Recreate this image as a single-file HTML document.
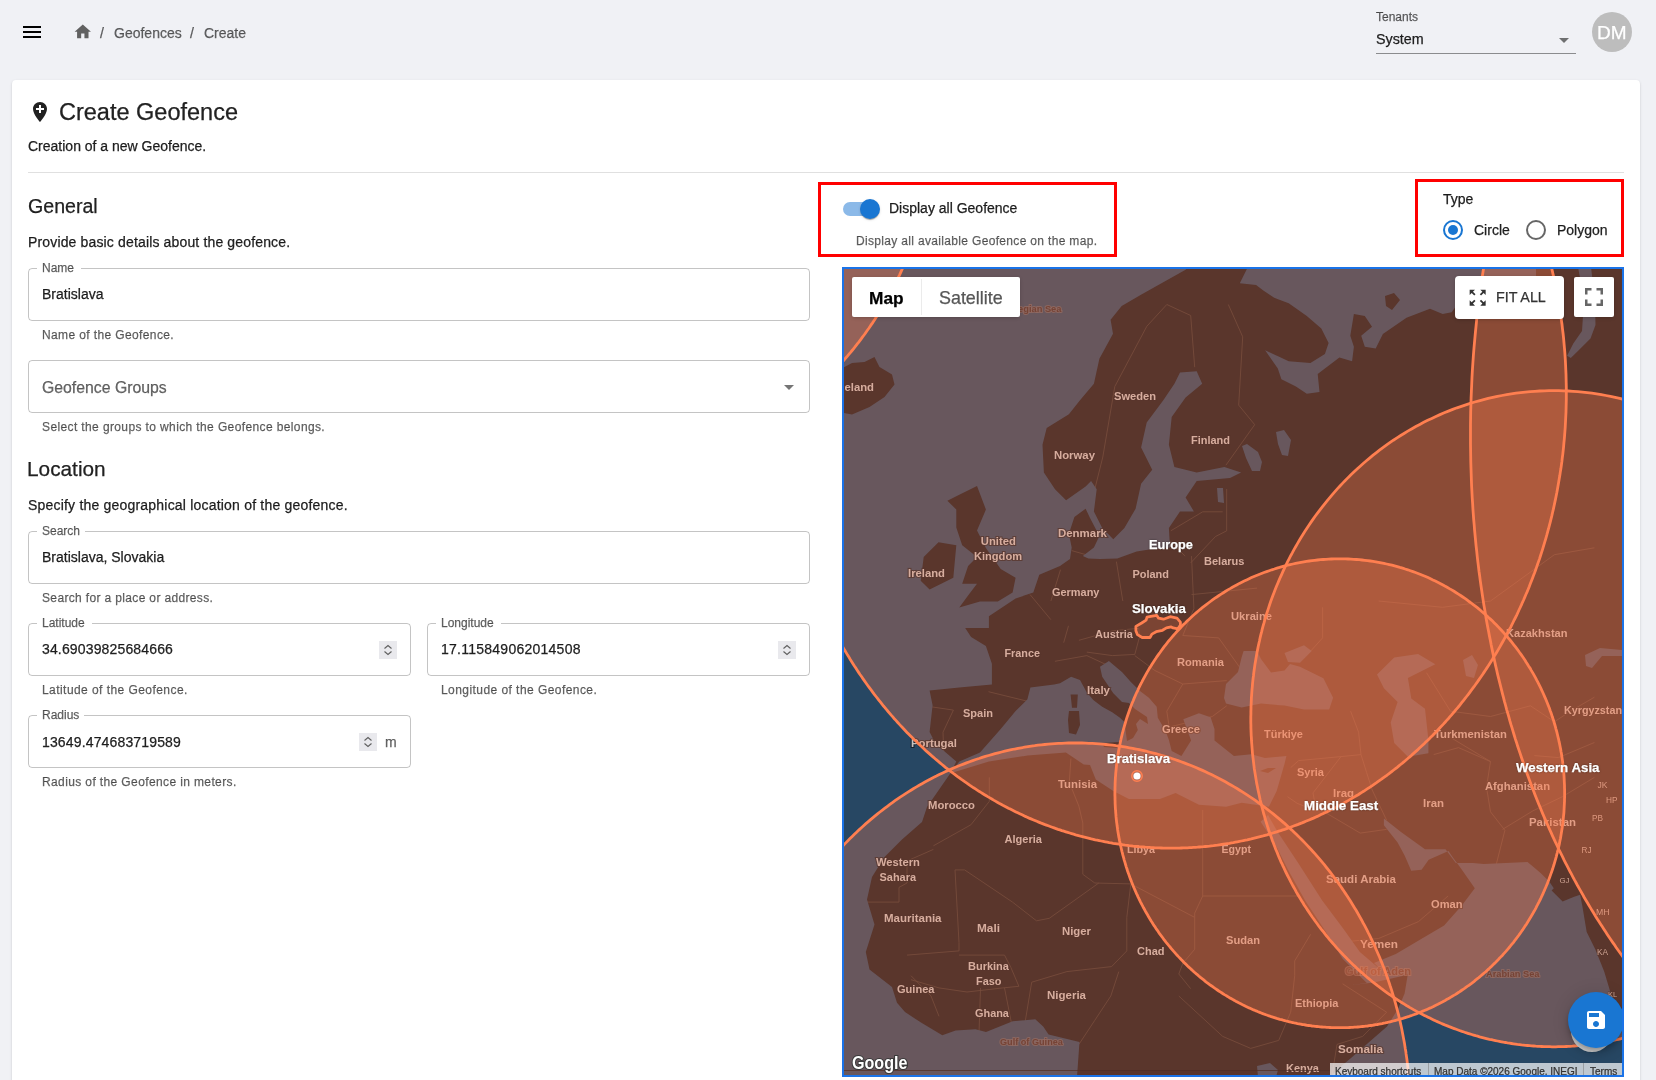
<!DOCTYPE html>
<html><head><meta charset="utf-8"><title>Create Geofence</title>
<style>*{box-sizing:border-box;margin:0;padding:0}
html,body{width:1656px;height:1080px;overflow:hidden;background:#f0f1f5;font-family:"Liberation Sans",sans-serif;color:rgba(0,0,0,0.87)}
.t{position:absolute;white-space:nowrap;will-change:transform;-webkit-text-stroke:0.25px currentColor}
.card{position:absolute;left:12px;top:80px;width:1628px;height:1100px;background:#fff;border-radius:4px;box-shadow:0 2px 1px -1px rgba(0,0,0,.2),0 1px 1px 0 rgba(0,0,0,.14),0 1px 3px 0 rgba(0,0,0,.12)}
.field{position:absolute;border:1px solid rgba(0,0,0,0.23);border-radius:4px}
.mapclip{position:absolute;left:844px;top:269px;width:778px;height:806px;overflow:hidden}
.mapclip>.t,.mapclip>svg{margin-left:-844px;margin-top:-269px}
</style></head><body>
<svg class="t" style="left:20px;top:20px" width="24" height="24" viewBox="0 0 24 24"><path d="M3 18h18v-2H3v2zm0-5h18v-2H3v2zm0-7v2h18V6H3z" fill="#000"/></svg>
<svg class="t" style="left:72.5px;top:22px" width="19.6" height="19.6" viewBox="0 0 24 24"><path d="M10 20v-6h4v6h5v-8h3L12 3 2 12h3v8z" fill="#616161"/></svg>
<div class="t" style="left:100.3px;top:26.05px;font-size:14px;line-height:14px;color:rgba(0,0,0,0.6)">/</div>
<div class="t" style="left:114.2px;top:26.05px;font-size:14px;line-height:14px;color:rgba(0,0,0,0.6)">Geofences</div>
<div class="t" style="left:190.4px;top:26.05px;font-size:14px;line-height:14px;color:rgba(0,0,0,0.6)">/</div>
<div class="t" style="left:204.0px;top:26.05px;font-size:14px;line-height:14px;color:rgba(0,0,0,0.6)">Create</div>
<div class="t" style="left:1376.0px;top:10.94px;font-size:12px;line-height:12px;color:rgba(0,0,0,0.6)">Tenants</div>
<div class="t" style="left:1375.5px;top:31.70px;font-size:14.3px;line-height:14.3px;color:rgba(0,0,0,0.87)">System</div>
<div class="t" style="left:1376px;top:53px;width:200px;height:1px;background:rgba(0,0,0,0.42)"></div>
<svg class="t" style="left:1552px;top:28px" width="24" height="24" viewBox="0 0 24 24"><path d="M7 10l5 5 5-5z" fill="rgba(0,0,0,0.54)"/></svg>
<div class="t" style="left:1592px;top:12px;width:40px;height:40px;border-radius:50%;background:#bdbdbd"></div>
<div class="t" style="left:1597.0px;top:22.92px;font-size:19px;line-height:19px;color:#fff">DM</div>
<div class="card"></div>
<svg class="t" style="left:28px;top:100px" width="24" height="24" viewBox="0 0 24 24"><path d="M12 2C8.14 2 5 5.14 5 9c0 5.25 7 13 7 13s7-7.75 7-13c0-3.86-3.14-7-7-7zm4 8h-3v3h-2v-3H8V8h3V5h2v3h3v2z" fill="rgba(0,0,0,0.87)"/></svg>
<div class="t" style="left:59.3px;top:100.71px;font-size:23.5px;line-height:23.5px;color:rgba(0,0,0,0.87)">Create Geofence</div>
<div class="t" style="left:28.0px;top:139.15px;font-size:14px;line-height:14px;color:rgba(0,0,0,0.87)">Creation of a new Geofence.</div>
<div class="t" style="left:28px;top:172px;width:1596px;height:1px;background:rgba(0,0,0,0.12)"></div>
<div class="t" style="left:27.5px;top:197.31px;font-size:19.6px;line-height:19.6px;color:rgba(0,0,0,0.87)">General</div>
<div class="t" style="left:28.0px;top:235.15px;font-size:14px;line-height:14px;color:rgba(0,0,0,0.87);letter-spacing:0.15px">Provide basic details about the geofence.</div>
<div class="field" style="left:28px;top:268px;width:782px;height:53px"></div><div class="t" style="left:37px;top:266px;width:44px;height:4px;background:#fff"></div>
<div class="t" style="left:42.3px;top:262.24px;font-size:12px;line-height:12px;color:rgba(0,0,0,0.6)">Name</div>
<div class="t" style="left:42.3px;top:287.15px;font-size:14px;line-height:14px;color:rgba(0,0,0,0.87)">Bratislava</div>
<div class="t" style="left:42.3px;top:328.94px;font-size:12px;line-height:12px;color:rgba(0,0,0,0.6);letter-spacing:0.38px">Name of the Geofence.</div>
<div class="field" style="left:28px;top:360px;width:782px;height:53px"></div>
<div class="t" style="left:42.3px;top:379.73px;font-size:15.8px;line-height:15.8px;color:rgba(0,0,0,0.6)">Geofence Groups</div>
<svg class="t" style="left:777px;top:375px" width="24" height="24" viewBox="0 0 24 24"><path d="M7 10l5 5 5-5z" fill="rgba(0,0,0,0.54)"/></svg>
<div class="t" style="left:42.3px;top:420.84px;font-size:12px;line-height:12px;color:rgba(0,0,0,0.6);letter-spacing:0.38px">Select the groups to which the Geofence belongs.</div>
<div class="t" style="left:27.3px;top:459.29px;font-size:20.8px;line-height:20.8px;color:rgba(0,0,0,0.87)">Location</div>
<div class="t" style="left:28.0px;top:497.95px;font-size:14px;line-height:14px;color:rgba(0,0,0,0.87);letter-spacing:0.2px">Specify the geographical location of the geofence.</div>
<div class="field" style="left:28px;top:531px;width:782px;height:53px"></div><div class="t" style="left:37px;top:529px;width:48px;height:4px;background:#fff"></div>
<div class="t" style="left:42.3px;top:524.84px;font-size:12px;line-height:12px;color:rgba(0,0,0,0.6)">Search</div>
<div class="t" style="left:42.3px;top:550.15px;font-size:14px;line-height:14px;color:rgba(0,0,0,0.87)">Bratislava, Slovakia</div>
<div class="t" style="left:42.3px;top:591.74px;font-size:12px;line-height:12px;color:rgba(0,0,0,0.6);letter-spacing:0.35px">Search for a place or address.</div>
<div class="field" style="left:28px;top:623px;width:383px;height:53px"></div><div class="t" style="left:37px;top:621px;width:55px;height:4px;background:#fff"></div>
<div class="t" style="left:42.3px;top:616.74px;font-size:12px;line-height:12px;color:rgba(0,0,0,0.6)">Latitude</div>
<div class="t" style="left:42.3px;top:642.15px;font-size:14px;line-height:14px;color:rgba(0,0,0,0.87);letter-spacing:0.15px">34.69039825684666</div>
<div class="t" style="left:42.3px;top:684.04px;font-size:12px;line-height:12px;color:rgba(0,0,0,0.6);letter-spacing:0.44px">Latitude of the Geofence.</div>
<div class="field" style="left:427px;top:623px;width:383px;height:53px"></div><div class="t" style="left:436px;top:621px;width:65px;height:4px;background:#fff"></div>
<div class="t" style="left:441.0px;top:616.74px;font-size:12px;line-height:12px;color:rgba(0,0,0,0.6)">Longitude</div>
<div class="t" style="left:441.0px;top:642.15px;font-size:14px;line-height:14px;color:rgba(0,0,0,0.87);letter-spacing:0.25px">17.115849062014508</div>
<div class="t" style="left:441.0px;top:684.04px;font-size:12px;line-height:12px;color:rgba(0,0,0,0.6);letter-spacing:0.44px">Longitude of the Geofence.</div>
<div class="field" style="left:28px;top:715px;width:383px;height:53px"></div><div class="t" style="left:37px;top:713px;width:47px;height:4px;background:#fff"></div>
<div class="t" style="left:42.1px;top:709.04px;font-size:12px;line-height:12px;color:rgba(0,0,0,0.6)">Radius</div>
<div class="t" style="left:42.1px;top:734.75px;font-size:14px;line-height:14px;color:rgba(0,0,0,0.87);letter-spacing:0.15px">13649.474683719589</div>
<div class="t" style="left:384.5px;top:734.75px;font-size:14px;line-height:14px;color:rgba(0,0,0,0.6)">m</div>
<div class="t" style="left:42.1px;top:776.24px;font-size:12px;line-height:12px;color:rgba(0,0,0,0.6);letter-spacing:0.38px">Radius of the Geofence in meters.</div>
<svg class="t" style="left:379px;top:641px" width="18" height="18" viewBox="0 0 18 18"><rect width="18" height="18" fill="#e9e9ed"/><path d="M5.5 7.5 L9 4.5 L12.5 7.5 M5.5 10.5 L9 13.5 L12.5 10.5" fill="none" stroke="#5f5f5f" stroke-width="1.1"/></svg>
<svg class="t" style="left:778px;top:641px" width="18" height="18" viewBox="0 0 18 18"><rect width="18" height="18" fill="#e9e9ed"/><path d="M5.5 7.5 L9 4.5 L12.5 7.5 M5.5 10.5 L9 13.5 L12.5 10.5" fill="none" stroke="#5f5f5f" stroke-width="1.1"/></svg>
<svg class="t" style="left:359px;top:733px" width="18" height="18" viewBox="0 0 18 18"><rect width="18" height="18" fill="#e9e9ed"/><path d="M5.5 7.5 L9 4.5 L12.5 7.5 M5.5 10.5 L9 13.5 L12.5 10.5" fill="none" stroke="#5f5f5f" stroke-width="1.1"/></svg>
<div class="t" style="left:818px;top:182px;width:299px;height:75px;border:3px solid #f00"></div>
<div class="t" style="left:843px;top:202px;width:34px;height:14px;border-radius:7px;background:#8bb9e8"></div>
<div class="t" style="left:860px;top:199px;width:20px;height:20px;border-radius:50%;background:#1976d2;box-shadow:0 2px 1px -1px rgba(0,0,0,.2),0 1px 1px 0 rgba(0,0,0,.14),0 1px 3px 0 rgba(0,0,0,.12)"></div>
<div class="t" style="left:889.3px;top:201.05px;font-size:14px;line-height:14px;color:rgba(0,0,0,0.87)">Display all Geofence</div>
<div class="t" style="left:856.2px;top:234.84px;font-size:12px;line-height:12px;color:rgba(0,0,0,0.6);letter-spacing:0.33px">Display all available Geofence on the map.</div>
<div class="t" style="left:1415px;top:179px;width:209px;height:78px;border:3px solid #f00"></div>
<div class="t" style="left:1443.0px;top:191.85px;font-size:14px;line-height:14px;color:rgba(0,0,0,0.87)">Type</div>
<div class="t" style="left:1443px;top:220px;width:20px;height:20px;border-radius:50%;border:2px solid #1976d2"></div>
<div class="t" style="left:1448px;top:225px;width:10px;height:10px;border-radius:50%;background:#1976d2"></div>
<div class="t" style="left:1473.5px;top:223.05px;font-size:14px;line-height:14px;color:rgba(0,0,0,0.87)">Circle</div>
<div class="t" style="left:1526px;top:220px;width:20px;height:20px;border-radius:50%;border:2px solid rgba(0,0,0,0.6)"></div>
<div class="t" style="left:1557.0px;top:223.05px;font-size:14px;line-height:14px;color:rgba(0,0,0,0.87)">Polygon</div>
<svg class="t" style="left:0;top:0" width="1656" height="1080" viewBox="0 0 1656 1080">
<defs><clipPath id="mclip"><rect x="844" y="269" width="778" height="806"/></clipPath></defs>
<g clip-path="url(#mclip)">
<rect x="842" y="267" width="782" height="810" fill="#13171d"/>
<path d="M1202.7,809.9 L1202.7,896.0 L1297.9,896.0 M1202.7,896.0 L1194.7,913.2 L1194.7,917.4 L1194.7,949.3 L1182.8,963.3 L1178.8,974.0 L1190.7,988.7 M1194.7,917.4 L1130.8,883.9 L1094.8,883.0 L1082.8,874.3 M964.6,869.9 L1012.5,902.1 L1036.5,920.8 L1049.3,918.3 L1098.8,883.0 M907.0,955.1 L959.0,950.9 L959.0,942.6 L955.0,869.9 L964.6,869.9 M867.0,902.1 L899.0,902.1 L899.0,887.4 L907.0,883.0 L907.0,861.0 L933.4,849.4 M933.4,845.8 L970.9,824.8 L989.3,801.4 L989.3,777.4 M1070.9,758.6 L1069.3,782.3 L1078.9,806.2 L1082.8,823.0 L1082.8,874.3 M1031.7,982.2 L1066.9,971.6 L1111.6,966.6 L1126.8,950.9 L1126.8,917.4 L1130.8,883.9 M911.0,979.7 L939.0,987.9 L967.0,992.0 L1002.9,987.9 L1018.9,986.3 L1010.9,967.5 L1004.5,955.1 L959.0,955.1 M939.0,1016.3 L931.0,996.0 L911.0,975.7 M978.9,1036.4 L980.5,987.9 M1012.5,1028.3 L1004.5,987.9 M1024.5,1025.9 L1031.7,982.2 M1078.9,1044.4 L1094.8,1020.3 L1110.8,996.0 L1118.8,971.6 M1178.8,996.0 L1222.7,1036.4 L1250.7,1048.4 L1278.7,1040.4 L1290.7,1012.2 L1294.7,975.7 L1294.7,960.9 L1310.6,934.3 M1386.6,1012.2 L1362.6,1036.4 L1337.0,1044.4 L1330.6,1084.4 M1342.6,983.8 L1386.6,1012.2 M1314.6,806.2 L1360.2,833.1 L1386.6,829.4 M1345.0,941.8 L1378.6,938.5 L1418.5,921.6 L1448.1,896.0 M1422.5,938.5 L1427.3,942.6 M1361.0,754.6 L1366.6,772.5 L1372.2,790.0 L1386.6,820.2 M1433.7,754.6 L1458.5,747.6 L1490.5,761.6 L1486.5,787.1 L1490.5,811.8 L1504.9,830.3 L1495.3,868.1 M1290.7,767.6 L1298.7,760.6 L1341.0,756.6 L1361.0,754.6 L1358.6,732.2 L1350.6,711.2 M1287.5,796.7 L1297.1,803.3 L1316.2,810.9 L1313.0,792.9 L1341.0,756.6 M1228.3,304.5 L1242.7,336.8 L1238.7,405.1 L1254.7,424.7 L1225.9,465.2 M1166.8,304.5 L1146.8,326.3 L1114.8,386.5 L1102.8,457.0 L1094.8,489.0 M1166.8,304.5 L1190.7,315.5 L1194.7,367.2 M1116.4,561.6 L1122.8,601.0 M1068.5,625.8 L1063.7,642.7 M988.5,691.7 L1028.5,701.5 M931.8,706.9 L953.4,710.1 L943.0,732.2 L943.8,755.6 M1191.5,594.6 L1257.1,588.1 M1191.5,556.1 L1193.9,608.5 L1182.8,635.5 M1182.8,635.5 L1218.7,637.9 L1239.5,667.1 M1182.8,684.0 L1226.7,680.6 M944.6,547.8 L952.6,561.6 M1050.9,619.7 L1030.1,594.6 M1050.9,601.0 L1060.5,569.7 M1071.7,550.6 L1090.8,556.1 M1078.9,640.3 L1113.2,630.7 L1138.8,628.3 L1139.6,636.7 L1134.8,654.4 L1112.4,655.6 L1086.8,652.1 M1054.9,661.3 L1086.8,655.6 L1111.6,667.1 M1134.8,655.6 L1154.8,670.5 L1182.8,684.0 L1166.8,711.2 L1169.2,727.0 L1212.3,716.5 L1226.7,705.8 M1322.6,607.3 L1322.6,637.9 L1306.6,655.6 M1378.6,601.0 L1442.5,607.3 L1490.5,601.0 L1554.4,554.7 L1594.4,547.8 M1426.5,672.7 L1450.5,711.2 L1490.5,716.5 L1530.4,705.8 L1554.4,721.8 L1570.4,711.2 L1594.4,697.2 M1450.5,737.4 L1490.5,761.6 M1534.4,755.6 L1558.4,757.6 L1594.4,742.5 M1594.4,777.4 L1562.4,796.7 L1532.8,810.9 L1502.5,829.4 M1226.7,489.0 L1226.7,530.8 L1215.5,536.5 L1190.7,562.9 M1222.7,511.8 L1202.7,511.8 L1170.8,530.8 M1185.2,556.1 L1172.4,543.6" fill="none" stroke="#3d3834" stroke-width="0.85" stroke-linejoin="round"/>
<path d="M842.0,267.0 L1188.0,267.0 L1185.6,269.8 L1160.6,283.7 L1141.0,294.8 L1121.7,305.9 L1110.6,319.8 L1113.0,333.7 L1099.4,358.7 L1093.9,383.7 L1080.0,400.3 L1068.9,414.2 L1046.7,428.1 L1042.5,444.8 L1043.9,472.6 L1055.0,489.2 L1066.1,500.3 L1085.6,486.4 L1091.1,480.9 L1096.7,489.2 L1093.9,511.4 L1102.2,528.1 L1113.3,539.2 L1124.4,528.1 L1135.6,508.7 L1141.1,483.7 L1152.2,469.8 L1141.1,447.6 L1146.7,422.6 L1163.3,400.3 L1174.4,383.7 L1180.0,372.6 L1196.7,371.2 L1202.2,383.7 L1185.6,397.6 L1171.7,417.0 L1168.9,444.8 L1174.4,467.0 L1196.7,472.6 L1224.4,467.0 L1241.1,472.6 L1230.0,478.1 L1196.7,480.9 L1185.6,497.6 L1193.9,511.4 L1180.0,511.4 L1168.9,528.1 L1170.0,547.6 L1149.4,549.5 L1136.6,551.4 L1117.3,558.6 L1100.0,559.0 L1088.3,558.6 L1082.8,556.0 L1093.9,547.6 L1099.4,536.0 L1090.0,518.0 L1085.6,508.7 L1074.4,517.0 L1068.9,533.7 L1071.7,547.6 L1070.0,559.0 L1060.0,565.9 L1039.3,574.8 L1033.3,592.6 L1015.6,598.5 L988.9,616.3 L988.9,628.1 L965.2,628.1 L971.1,637.0 L985.9,645.9 L991.9,663.7 L991.9,684.4 L959.3,687.4 L929.6,690.4 L932.6,705.2 L929.6,731.9 L935.6,743.7 L956.3,761.5 L950.4,773.3 L927.0,807.0 L922.0,822.0 L902.0,839.5 L884.5,857.0 L872.0,877.0 L867.0,899.5 L874.5,924.5 L865.8,952.0 L869.5,969.5 L892.0,987.0 L897.0,1002.7 L905.0,1012.0 L921.0,1022.6 L942.3,1035.2 L955.6,1030.5 L975.5,1029.2 L986.0,1032.0 L1012.7,1021.3 L1035.3,1019.3 L1043.2,1026.6 L1048.6,1034.5 L1079.5,1042.0 L1077.0,1077.0 L842.0,1077.0 Z M1247.0,267.0 L1247.0,268.8 L1239.8,283.3 L1256.1,285.1 L1263.3,290.6 L1274.2,297.8 L1288.7,303.2 L1306.8,315.9 L1321.3,328.6 L1328.6,343.1 L1324.9,354.0 L1310.4,363.0 L1288.7,361.2 L1265.1,350.3 L1277.8,368.4 L1281.4,379.3 L1295.9,386.6 L1306.8,393.8 L1319.5,392.0 L1317.7,373.9 L1339.4,357.6 L1352.1,361.2 L1353.9,346.7 L1350.3,335.8 L1353.9,314.1 L1364.8,315.9 L1372.0,326.8 L1361.2,335.8 L1364.8,346.7 L1375.7,348.5 L1382.9,334.0 L1406.5,317.7 L1430.0,308.7 L1442.7,314.1 L1451.7,312.3 L1455.4,306.9 L1469.9,272.4 L1460.0,276.0 L1536.0,276.0 L1536.0,267.0 Z M1578.0,267.0 L1591.0,267.0 L1595.0,300.0 L1595.5,324.9 L1590.5,338.4 L1578.2,350.7 L1570.8,358.1 L1567.1,355.7 L1573.3,343.4 L1582.0,331.0 L1584.0,300.0 Z M959.3,761.5 L980.0,752.6 L1000.7,728.9 L1015.6,711.1 L1027.4,699.3 L1030.4,687.4 L1054.1,684.4 L1060.0,683.3 L1071.1,676.7 L1080.0,680.0 L1086.7,692.2 L1093.3,700.0 L1102.2,706.7 L1112.2,712.2 L1120.0,717.8 L1124.4,722.0 L1127.0,741.0 L1133.0,738.0 L1137.8,730.0 L1136.0,724.0 L1140.0,719.0 L1148.0,724.0 L1147.0,717.0 L1135.0,709.0 L1129.0,703.0 L1122.0,702.0 L1113.3,693.3 L1102.2,676.7 L1100.0,666.7 L1108.9,661.1 L1122.2,672.2 L1131.1,682.2 L1140.0,691.1 L1148.9,697.8 L1156.7,706.7 L1157.8,717.8 L1165.6,731.1 L1168.9,740.0 L1171.7,751.0 L1181.4,756.1 L1191.1,740.6 L1183.3,719.2 L1198.9,713.3 L1210.6,717.2 L1214.5,728.9 L1214.5,740.6 L1233.9,756.1 L1251.4,754.2 L1265.0,758.0 L1286.4,756.1 L1284.5,763.9 L1276.7,791.1 L1268.9,806.7 L1241.7,802.8 L1226.1,806.7 L1198.9,804.8 L1175.6,793.1 L1160.0,798.9 L1128.9,798.9 L1113.3,791.1 L1095.8,779.5 L1090.0,765.0 L1083.7,764.4 L1065.9,752.6 L1027.4,755.6 L988.9,761.5 L950.4,773.3 Z M1226.0,703.6 L1224.0,698.0 L1226.0,684.0 L1238.0,672.0 L1241.7,657.0 L1243.6,651.0 L1257.0,651.0 L1261.0,659.0 L1271.0,672.5 L1284.5,670.6 L1290.0,664.0 L1300.0,666.7 L1323.4,678.3 L1333.1,697.8 L1329.2,709.5 L1304.0,709.5 L1284.5,705.6 L1261.0,703.6 L1241.7,707.5 Z M1284.5,653.0 L1304.0,645.3 L1311.7,651.0 L1300.0,662.8 L1288.0,662.0 Z M1242.0,446.0 L1247.0,444.0 L1258.0,452.0 L1262.0,462.0 L1260.0,471.0 L1252.0,471.0 L1246.0,458.0 Z M1217.0,488.0 L1223.0,488.0 L1224.0,503.0 L1218.0,502.0 Z M1276.0,432.0 L1284.0,430.0 L1291.0,440.0 L1288.0,456.0 L1282.0,455.0 L1278.0,444.0 Z M1463.0,660.0 L1472.0,655.0 L1478.0,665.0 L1474.0,678.0 L1466.0,676.0 Z M1585.0,655.0 L1600.0,648.0 L1622.0,650.0 L1622.0,656.0 L1602.0,656.0 L1592.0,668.0 L1586.0,666.0 Z M1257.0,1066.0 L1270.0,1063.0 L1278.0,1070.0 L1276.0,1077.0 L1258.0,1077.0 Z M1377.0,674.5 L1394.2,657.4 L1418.1,654.0 L1435.3,664.3 L1407.9,678.0 L1411.3,698.5 L1425.0,708.8 L1428.4,739.6 L1428.4,753.3 L1407.9,756.8 L1394.2,743.0 L1390.7,722.5 L1397.6,701.9 L1383.9,688.2 Z M1260.6,821.8 L1274.3,842.4 L1288.0,869.8 L1305.1,900.6 L1325.6,931.5 L1342.8,958.9 L1366.8,982.9 L1352.0,985.0 L1373.9,982.6 L1402.4,976.0 L1407.9,973.8 L1404.6,993.6 L1398.0,1008.9 L1387.0,1026.5 L1369.5,1041.8 L1351.9,1057.2 L1338.8,1068.2 L1330.0,1077.0 L1624.0,1077.0 L1624.0,1022.0 L1619.6,1015.5 L1610.8,993.6 L1604.2,971.6 L1595.5,949.7 L1586.7,932.1 L1582.3,905.8 L1580.1,894.8 L1573.5,897.0 L1562.6,901.4 L1551.6,890.5 L1553.8,888.3 L1549.4,881.7 L1540.6,872.9 L1527.5,861.9 L1483.6,864.1 L1473.0,863.0 L1455.8,863.0 L1445.5,849.3 L1425.0,849.3 L1401.0,832.1 L1383.9,818.4 L1383.9,825.3 L1397.6,842.4 L1404.6,855.4 L1407.9,863.0 L1411.2,870.7 L1421.6,869.8 L1428.7,859.7 L1448.5,851.0 L1452.9,857.6 L1459.4,866.3 L1474.8,888.3 L1461.6,905.8 L1444.1,925.6 L1417.8,940.9 L1395.8,954.1 L1373.9,962.9 L1383.9,972.6 L1359.9,952.0 L1342.8,928.0 L1322.2,900.6 L1298.2,863.0 L1277.7,832.1 L1268.0,815.0 Z" fill="#274763"/>
<path d="M838.0,367.0 L844.5,367.0 L852.0,363.0 L864.5,362.0 L874.5,357.0 L879.5,367.0 L892.0,374.5 L894.5,384.5 L884.5,397.0 L869.5,407.0 L852.0,414.5 L838.0,412.0 Z M947.4,500.7 L959.3,494.8 L977.0,485.9 L985.9,509.6 L977.0,530.4 L985.9,548.1 L1000.7,568.9 L1015.6,577.8 L1012.6,592.6 L997.8,601.5 L980.0,601.5 L959.3,607.4 L968.1,595.6 L977.0,583.7 L962.2,583.7 L968.1,565.9 L977.0,557.0 L962.2,545.2 L956.3,527.4 L956.3,509.6 Z M923.7,557.0 L938.5,542.2 L956.3,545.2 L953.3,577.8 L929.6,589.6 L920.7,580.7 Z M1070.6,694.4 L1077.8,694.4 L1077.0,707.8 L1072.0,707.8 Z M1069.0,711.0 L1079.0,711.0 L1080.0,725.0 L1076.0,734.4 L1069.0,733.0 L1068.0,720.0 Z M1102.0,743.0 L1120.0,742.0 L1117.0,748.0 L1104.0,747.0 Z M1260.0,771.0 L1268.0,768.0 L1276.0,768.0 L1268.0,773.0 Z M1385.0,296.0 L1394.0,293.0 L1400.0,300.0 L1392.0,310.0 L1386.0,306.0 Z" fill="#13171d"/>
<g font-family="Liberation Sans"><text x="835.1" y="390.8" font-size="11.30" font-weight="700" fill="#c6c2c0" stroke="#13171d" stroke-width="2.2" stroke-opacity="0.75" paint-order="stroke">Iceland</text><text x="994.8" y="311.5" font-size="9.30" font-weight="700" fill="#3b2a2a" stroke="#7a6a6a" stroke-width="2.0" stroke-opacity="0.6" paint-order="stroke">Norwegian Sea</text><text x="1054.0" y="459.0" font-size="11.35" font-weight="700" fill="#c6c2c0" stroke="#13171d" stroke-width="2.2" stroke-opacity="0.75" paint-order="stroke">Norway</text><text x="1114.0" y="400.0" font-size="11.11" font-weight="700" fill="#c6c2c0" stroke="#13171d" stroke-width="2.2" stroke-opacity="0.75" paint-order="stroke">Sweden</text><text x="1191.0" y="444.0" font-size="10.97" font-weight="700" fill="#c6c2c0" stroke="#13171d" stroke-width="2.2" stroke-opacity="0.75" paint-order="stroke">Finland</text><text x="980.8" y="544.5" font-size="11.25" font-weight="700" fill="#c6c2c0" stroke="#13171d" stroke-width="2.2" stroke-opacity="0.75" paint-order="stroke">United</text><text x="974.0" y="560.0" font-size="11.08" font-weight="700" fill="#c6c2c0" stroke="#13171d" stroke-width="2.2" stroke-opacity="0.75" paint-order="stroke">Kingdom</text><text x="908.0" y="577.0" font-size="11.28" font-weight="700" fill="#c6c2c0" stroke="#13171d" stroke-width="2.2" stroke-opacity="0.75" paint-order="stroke">Ireland</text><text x="1058.0" y="537.0" font-size="11.45" font-weight="700" fill="#c6c2c0" stroke="#13171d" stroke-width="2.2" stroke-opacity="0.75" paint-order="stroke">Denmark</text><text x="1052.0" y="595.8" font-size="10.95" font-weight="700" fill="#c6c2c0" stroke="#13171d" stroke-width="2.2" stroke-opacity="0.75" paint-order="stroke">Germany</text><text x="1004.5" y="657.0" font-size="10.82" font-weight="700" fill="#c6c2c0" stroke="#13171d" stroke-width="2.2" stroke-opacity="0.75" paint-order="stroke">France</text><text x="963.0" y="716.5" font-size="11.02" font-weight="700" fill="#c6c2c0" stroke="#13171d" stroke-width="2.2" stroke-opacity="0.75" paint-order="stroke">Spain</text><text x="911.0" y="747.0" font-size="11.34" font-weight="700" fill="#c6c2c0" stroke="#13171d" stroke-width="2.2" stroke-opacity="0.75" paint-order="stroke">Portugal</text><text x="1058.0" y="787.5" font-size="11.38" font-weight="700" fill="#c6c2c0" stroke="#13171d" stroke-width="2.2" stroke-opacity="0.75" paint-order="stroke">Tunisia</text><text x="928.0" y="809.0" font-size="11.28" font-weight="700" fill="#c6c2c0" stroke="#13171d" stroke-width="2.2" stroke-opacity="0.75" paint-order="stroke">Morocco</text><text x="1004.5" y="842.5" font-size="11.06" font-weight="700" fill="#c6c2c0" stroke="#13171d" stroke-width="2.2" stroke-opacity="0.75" paint-order="stroke">Algeria</text><text x="876.0" y="865.8" font-size="11.20" font-weight="700" fill="#c6c2c0" stroke="#13171d" stroke-width="2.2" stroke-opacity="0.75" paint-order="stroke">Western</text><text x="879.5" y="880.8" font-size="10.94" font-weight="700" fill="#c6c2c0" stroke="#13171d" stroke-width="2.2" stroke-opacity="0.75" paint-order="stroke">Sahara</text><text x="884.0" y="922.0" font-size="11.50" font-weight="700" fill="#c6c2c0" stroke="#13171d" stroke-width="2.2" stroke-opacity="0.75" paint-order="stroke">Mauritania</text><text x="977.0" y="932.0" font-size="11.82" font-weight="700" fill="#c6c2c0" stroke="#13171d" stroke-width="2.2" stroke-opacity="0.75" paint-order="stroke">Mali</text><text x="1062.0" y="935.0" font-size="11.34" font-weight="700" fill="#c6c2c0" stroke="#13171d" stroke-width="2.2" stroke-opacity="0.75" paint-order="stroke">Niger</text><text x="968.0" y="970.0" font-size="11.01" font-weight="700" fill="#c6c2c0" stroke="#13171d" stroke-width="2.2" stroke-opacity="0.75" paint-order="stroke">Burkina</text><text x="976.0" y="985.0" font-size="10.92" font-weight="700" fill="#c6c2c0" stroke="#13171d" stroke-width="2.2" stroke-opacity="0.75" paint-order="stroke">Faso</text><text x="897.0" y="993.0" font-size="11.06" font-weight="700" fill="#c6c2c0" stroke="#13171d" stroke-width="2.2" stroke-opacity="0.75" paint-order="stroke">Guinea</text><text x="1047.0" y="999.0" font-size="11.50" font-weight="700" fill="#c6c2c0" stroke="#13171d" stroke-width="2.2" stroke-opacity="0.75" paint-order="stroke">Nigeria</text><text x="975.0" y="1017.0" font-size="10.92" font-weight="700" fill="#c6c2c0" stroke="#13171d" stroke-width="2.2" stroke-opacity="0.75" paint-order="stroke">Ghana</text><text x="1000.0" y="1045.0" font-size="9.14" font-weight="700" fill="#3b2a2a" stroke="#7a6a6a" stroke-width="2.0" stroke-opacity="0.6" paint-order="stroke">Gulf of Guinea</text><text x="1204.0" y="564.5" font-size="11.04" font-weight="700" fill="#c6c2c0" stroke="#13171d" stroke-width="2.2" stroke-opacity="0.75" paint-order="stroke">Belarus</text><text x="1132.5" y="578.0" font-size="10.95" font-weight="700" fill="#c6c2c0" stroke="#13171d" stroke-width="2.2" stroke-opacity="0.75" paint-order="stroke">Poland</text><text x="1095.0" y="637.5" font-size="11.03" font-weight="700" fill="#c6c2c0" stroke="#13171d" stroke-width="2.2" stroke-opacity="0.75" paint-order="stroke">Austria</text><text x="1231.0" y="619.5" font-size="11.18" font-weight="700" fill="#c6c2c0" stroke="#13171d" stroke-width="2.2" stroke-opacity="0.75" paint-order="stroke">Ukraine</text><text x="1177.0" y="665.8" font-size="11.13" font-weight="700" fill="#c6c2c0" stroke="#13171d" stroke-width="2.2" stroke-opacity="0.75" paint-order="stroke">Romania</text><text x="1087.0" y="694.4" font-size="11.49" font-weight="700" fill="#c6c2c0" stroke="#13171d" stroke-width="2.2" stroke-opacity="0.75" paint-order="stroke">Italy</text><text x="1162.0" y="733.0" font-size="11.20" font-weight="700" fill="#c6c2c0" stroke="#13171d" stroke-width="2.2" stroke-opacity="0.75" paint-order="stroke">Greece</text><text x="1264.0" y="738.0" font-size="10.96" font-weight="700" fill="#c6c2c0" stroke="#13171d" stroke-width="2.2" stroke-opacity="0.75" paint-order="stroke">Türkiye</text><text x="1297.0" y="775.8" font-size="11.03" font-weight="700" fill="#c6c2c0" stroke="#13171d" stroke-width="2.2" stroke-opacity="0.75" paint-order="stroke">Syria</text><text x="1333.0" y="797.0" font-size="11.45" font-weight="700" fill="#c6c2c0" stroke="#13171d" stroke-width="2.2" stroke-opacity="0.75" paint-order="stroke">Iraq</text><text x="1127.0" y="853.0" font-size="10.72" font-weight="700" fill="#c6c2c0" stroke="#13171d" stroke-width="2.2" stroke-opacity="0.75" paint-order="stroke">Libya</text><text x="1221.5" y="853.0" font-size="10.62" font-weight="700" fill="#c6c2c0" stroke="#13171d" stroke-width="2.2" stroke-opacity="0.75" paint-order="stroke">Egypt</text><text x="1226.0" y="944.0" font-size="11.12" font-weight="700" fill="#c6c2c0" stroke="#13171d" stroke-width="2.2" stroke-opacity="0.75" paint-order="stroke">Sudan</text><text x="1137.0" y="955.0" font-size="11.00" font-weight="700" fill="#c6c2c0" stroke="#13171d" stroke-width="2.2" stroke-opacity="0.75" paint-order="stroke">Chad</text><text x="1295.0" y="1007.0" font-size="11.03" font-weight="700" fill="#c6c2c0" stroke="#13171d" stroke-width="2.2" stroke-opacity="0.75" paint-order="stroke">Ethiopia</text><text x="1286.0" y="1072.0" font-size="10.99" font-weight="700" fill="#c6c2c0" stroke="#13171d" stroke-width="2.2" stroke-opacity="0.75" paint-order="stroke">Kenya</text><text x="1338.0" y="1053.0" font-size="11.73" font-weight="700" fill="#c6c2c0" stroke="#13171d" stroke-width="2.2" stroke-opacity="0.75" paint-order="stroke">Somalia</text><text x="1326.0" y="883.0" font-size="11.52" font-weight="700" fill="#c6c2c0" stroke="#13171d" stroke-width="2.2" stroke-opacity="0.75" paint-order="stroke">Saudi Arabia</text><text x="1431.0" y="908.0" font-size="11.11" font-weight="700" fill="#c6c2c0" stroke="#13171d" stroke-width="2.2" stroke-opacity="0.75" paint-order="stroke">Oman</text><text x="1360.0" y="948.0" font-size="11.79" font-weight="700" fill="#c6c2c0" stroke="#13171d" stroke-width="2.2" stroke-opacity="0.75" paint-order="stroke">Yemen</text><text x="1423.0" y="806.8" font-size="11.45" font-weight="700" fill="#c6c2c0" stroke="#13171d" stroke-width="2.2" stroke-opacity="0.75" paint-order="stroke">Iran</text><text x="1529.0" y="826.0" font-size="11.43" font-weight="700" fill="#c6c2c0" stroke="#13171d" stroke-width="2.2" stroke-opacity="0.75" paint-order="stroke">Pakistan</text><text x="1345.0" y="974.5" font-size="11.07" font-weight="700" fill="#3b2a2a" stroke="#7a6a6a" stroke-width="2.0" stroke-opacity="0.6" paint-order="stroke">Gulf of Aden</text><text x="1486.0" y="977.0" font-size="9.26" font-weight="700" fill="#3b2a2a" stroke="#7a6a6a" stroke-width="2.0" stroke-opacity="0.6" paint-order="stroke">Arabian Sea</text><text x="1506.0" y="637.0" font-size="11.07" font-weight="700" fill="#c6c2c0" stroke="#13171d" stroke-width="2.2" stroke-opacity="0.75" paint-order="stroke">Kazakhstan</text><text x="1564.0" y="714.0" font-size="10.76" font-weight="700" fill="#c6c2c0" stroke="#13171d" stroke-width="2.2" stroke-opacity="0.75" paint-order="stroke">Kyrgyzstan</text><text x="1434.0" y="738.0" font-size="11.26" font-weight="700" fill="#c6c2c0" stroke="#13171d" stroke-width="2.2" stroke-opacity="0.75" paint-order="stroke">Turkmenistan</text><text x="1485.0" y="789.5" font-size="11.25" font-weight="700" fill="#c6c2c0" stroke="#13171d" stroke-width="2.2" stroke-opacity="0.75" paint-order="stroke">Afghanistan</text><text x="1597.5" y="788.0" font-size="8.57" font-weight="400" fill="#b9b3b0" stroke="#13171d" stroke-width="1.5" stroke-opacity="0.6" paint-order="stroke">JK</text><text x="1606.0" y="803.0" font-size="8.27" font-weight="400" fill="#b9b3b0" stroke="#13171d" stroke-width="1.5" stroke-opacity="0.6" paint-order="stroke">HP</text><text x="1592.0" y="821.0" font-size="8.24" font-weight="400" fill="#b9b3b0" stroke="#13171d" stroke-width="1.5" stroke-opacity="0.6" paint-order="stroke">PB</text><text x="1581.5" y="853.0" font-size="8.18" font-weight="400" fill="#b9b3b0" stroke="#13171d" stroke-width="1.5" stroke-opacity="0.6" paint-order="stroke">RJ</text><text x="1559.5" y="883.0" font-size="7.82" font-weight="400" fill="#b9b3b0" stroke="#13171d" stroke-width="1.5" stroke-opacity="0.6" paint-order="stroke">GJ</text><text x="1596.0" y="914.5" font-size="8.68" font-weight="400" fill="#b9b3b0" stroke="#13171d" stroke-width="1.5" stroke-opacity="0.6" paint-order="stroke">MH</text><text x="1597.0" y="954.5" font-size="8.24" font-weight="400" fill="#b9b3b0" stroke="#13171d" stroke-width="1.5" stroke-opacity="0.6" paint-order="stroke">KA</text><text x="1608.0" y="997.0" font-size="7.36" font-weight="400" fill="#b9b3b0" stroke="#13171d" stroke-width="1.5" stroke-opacity="0.6" paint-order="stroke">KL</text></g>
<path d="M1171.3,-63.2 L1296.2,-40.2 L1397.1,17.6 L1467.7,89.9 L1513.4,163.3 L1537.8,221.2 L1539.7,226.7 L1541.5,232.3 L1543.2,237.7 L1544.9,243.2 L1546.4,248.6 L1547.9,253.9 L1549.3,259.2 L1550.7,264.5 L1552.0,269.7 L1553.2,274.9 L1554.3,280.1 L1555.4,285.2 L1556.4,290.2 L1557.4,295.2 L1558.3,300.2 L1559.1,305.1 L1559.9,310.0 L1560.6,314.8 L1561.3,319.7 L1562.0,324.4 L1562.5,329.1 L1563.1,333.8 L1563.6,338.5 L1564.0,343.1 L1564.4,347.6 L1564.8,352.2 L1565.1,356.7 L1565.4,361.1 L1565.6,365.5 L1565.8,369.9 L1566.0,374.3 L1566.1,378.6 L1566.2,382.8 L1566.3,387.1 L1566.3,391.3 L1566.3,395.4 L1566.3,399.6 L1566.2,403.7 L1566.1,407.7 L1566.0,411.8 L1565.8,415.8 L1565.6,419.7 L1565.4,423.7 L1565.2,427.6 L1564.9,431.5 L1564.6,435.3 L1564.3,439.1 L1563.9,442.9 L1563.6,446.6 L1563.2,450.4 L1562.8,454.1 L1562.3,457.7 L1561.9,461.4 L1561.4,465.0 L1560.9,468.6 L1560.3,472.1 L1559.8,475.6 L1559.2,479.1 L1558.6,482.6 L1558.0,486.0 L1557.4,489.5 L1556.8,492.8 L1556.1,496.2 L1555.4,499.6 L1554.7,502.9 L1554.0,506.2 L1553.3,509.4 L1552.5,512.7 L1551.8,515.9 L1551.0,519.1 L1550.2,522.3 L1549.4,525.4 L1548.6,528.5 L1547.7,531.6 L1546.9,534.7 L1546.0,537.8 L1545.1,540.8 L1544.2,543.8 L1543.3,546.8 L1542.4,549.8 L1541.5,552.7 L1540.5,555.7 L1539.6,558.6 L1538.6,561.4 L1537.6,564.3 L1536.6,567.1 L1535.6,570.0 L1534.6,572.8 L1533.5,575.6 L1532.5,578.3 L1531.4,581.1 L1530.3,583.8 L1529.3,586.5 L1528.2,589.2 L1527.1,591.9 L1525.9,594.5 L1524.8,597.1 L1523.7,599.8 L1522.5,602.3 L1521.4,604.9 L1520.2,607.5 L1519.0,610.0 L1517.9,612.5 L1516.7,615.1 L1515.5,617.5 L1514.2,620.0 L1513.0,622.5 L1511.8,624.9 L1510.6,627.3 L1509.3,629.7 L1508.0,632.1 L1506.8,634.5 L1505.5,636.8 L1504.2,639.2 L1502.9,641.5 L1501.6,643.8 L1500.3,646.1 L1499.0,648.4 L1497.7,650.6 L1496.3,652.9 L1495.0,655.1 L1493.6,657.3 L1492.3,659.5 L1490.9,661.7 L1489.5,663.9 L1488.2,666.0 L1486.8,668.1 L1485.4,670.3 L1484.0,672.4 L1482.6,674.5 L1481.2,676.5 L1479.7,678.6 L1478.3,680.6 L1476.9,682.7 L1475.4,684.7 L1474.0,686.7 L1472.5,688.7 L1471.0,690.7 L1469.6,692.6 L1468.1,694.6 L1466.6,696.5 L1465.1,698.4 L1463.6,700.3 L1462.1,702.2 L1460.6,704.1 L1459.1,706.0 L1457.6,707.8 L1456.0,709.7 L1454.5,711.5 L1452.9,713.3 L1451.4,715.1 L1449.8,716.9 L1448.3,718.7 L1446.7,720.4 L1445.1,722.2 L1443.6,723.9 L1442.0,725.6 L1440.4,727.3 L1438.8,729.0 L1437.2,730.7 L1435.6,732.4 L1434.0,734.0 L1432.4,735.7 L1430.7,737.3 L1429.1,738.9 L1427.5,740.5 L1425.8,742.1 L1424.2,743.7 L1422.5,745.3 L1420.9,746.8 L1419.2,748.3 L1417.6,749.9 L1415.9,751.4 L1414.2,752.9 L1412.5,754.4 L1410.9,755.9 L1409.2,757.3 L1407.5,758.8 L1405.8,760.2 L1404.1,761.7 L1402.4,763.1 L1400.6,764.5 L1398.9,765.9 L1397.2,767.3 L1395.5,768.6 L1393.7,770.0 L1392.0,771.3 L1390.3,772.7 L1388.5,774.0 L1386.8,775.3 L1385.0,776.6 L1383.2,777.9 L1381.5,779.2 L1379.7,780.4 L1377.9,781.7 L1376.2,782.9 L1374.4,784.1 L1372.6,785.4 L1370.8,786.6 L1369.0,787.8 L1367.2,788.9 L1365.4,790.1 L1363.6,791.3 L1361.8,792.4 L1360.0,793.5 L1358.2,794.7 L1356.3,795.8 L1354.5,796.9 L1352.7,797.9 L1350.9,799.0 L1349.0,800.1 L1347.2,801.1 L1345.3,802.2 L1343.5,803.2 L1341.6,804.2 L1339.8,805.2 L1337.9,806.2 L1336.1,807.2 L1334.2,808.2 L1332.3,809.1 L1330.5,810.1 L1328.6,811.0 L1326.7,811.9 L1324.8,812.8 L1322.9,813.7 L1321.0,814.6 L1319.2,815.5 L1317.3,816.4 L1315.4,817.2 L1313.5,818.1 L1311.6,818.9 L1309.7,819.7 L1307.7,820.5 L1305.8,821.3 L1303.9,822.1 L1302.0,822.9 L1300.1,823.6 L1298.2,824.4 L1296.2,825.1 L1294.3,825.8 L1292.4,826.5 L1290.4,827.2 L1288.5,827.9 L1286.6,828.6 L1284.6,829.3 L1282.7,829.9 L1280.7,830.6 L1278.8,831.2 L1276.8,831.8 L1274.9,832.4 L1272.9,833.0 L1271.0,833.6 L1269.0,834.2 L1267.1,834.8 L1265.1,835.3 L1263.1,835.9 L1261.2,836.4 L1259.2,836.9 L1257.2,837.4 L1255.3,837.9 L1253.3,838.4 L1251.3,838.9 L1249.3,839.3 L1247.3,839.8 L1245.4,840.2 L1243.4,840.6 L1241.4,841.0 L1239.4,841.4 L1237.4,841.8 L1235.4,842.2 L1233.4,842.6 L1231.5,842.9 L1229.5,843.3 L1227.5,843.6 L1225.5,843.9 L1223.5,844.2 L1221.5,844.5 L1219.5,844.8 L1217.5,845.1 L1215.5,845.3 L1213.5,845.6 L1211.5,845.8 L1209.5,846.1 L1207.5,846.3 L1205.5,846.5 L1203.5,846.7 L1201.5,846.8 L1199.4,847.0 L1197.4,847.2 L1195.4,847.3 L1193.4,847.4 L1191.4,847.6 L1189.4,847.7 L1187.4,847.8 L1185.4,847.9 L1183.4,847.9 L1181.4,848.0 L1179.4,848.1 L1177.3,848.1 L1175.3,848.1 L1173.3,848.1 L1171.3,848.2 L1169.3,848.1 L1167.3,848.1 L1165.3,848.1 L1163.3,848.1 L1161.2,848.0 L1159.2,847.9 L1157.2,847.9 L1155.2,847.8 L1153.2,847.7 L1151.2,847.6 L1149.2,847.4 L1147.2,847.3 L1145.2,847.2 L1143.2,847.0 L1141.2,846.8 L1139.2,846.7 L1137.1,846.5 L1135.1,846.3 L1133.1,846.1 L1131.1,845.8 L1129.1,845.6 L1127.1,845.3 L1125.1,845.1 L1123.1,844.8 L1121.1,844.5 L1119.1,844.2 L1117.1,843.9 L1115.1,843.6 L1113.1,843.3 L1111.2,842.9 L1109.2,842.6 L1107.2,842.2 L1105.2,841.8 L1103.2,841.4 L1101.2,841.0 L1099.2,840.6 L1097.2,840.2 L1095.3,839.8 L1093.3,839.3 L1091.3,838.9 L1089.3,838.4 L1087.4,837.9 L1085.4,837.4 L1083.4,836.9 L1081.4,836.4 L1079.5,835.9 L1077.5,835.3 L1075.6,834.8 L1073.6,834.2 L1071.6,833.6 L1069.7,833.0 L1067.7,832.4 L1065.8,831.8 L1063.8,831.2 L1061.9,830.6 L1059.9,829.9 L1058.0,829.3 L1056.0,828.6 L1054.1,827.9 L1052.2,827.2 L1050.2,826.5 L1048.3,825.8 L1046.4,825.1 L1044.4,824.4 L1042.5,823.6 L1040.6,822.9 L1038.7,822.1 L1036.8,821.3 L1034.9,820.5 L1033.0,819.7 L1031.0,818.9 L1029.1,818.1 L1027.2,817.2 L1025.3,816.4 L1023.5,815.5 L1021.6,814.6 L1019.7,813.7 L1017.8,812.8 L1015.9,811.9 L1014.0,811.0 L1012.2,810.1 L1010.3,809.1 L1008.4,808.2 L1006.6,807.2 L1004.7,806.2 L1002.8,805.2 L1001.0,804.2 L999.1,803.2 L997.3,802.2 L995.4,801.1 L993.6,800.1 L991.8,799.0 L989.9,797.9 L988.1,796.9 L986.3,795.8 L984.5,794.7 L982.6,793.5 L980.8,792.4 L979.0,791.3 L977.2,790.1 L975.4,788.9 L973.6,787.8 L971.8,786.6 L970.0,785.4 L968.2,784.1 L966.5,782.9 L964.7,781.7 L962.9,780.4 L961.1,779.2 L959.4,777.9 L957.6,776.6 L955.9,775.3 L954.1,774.0 L952.4,772.7 L950.6,771.3 L948.9,770.0 L947.1,768.6 L945.4,767.3 L943.7,765.9 L942.0,764.5 L940.3,763.1 L938.6,761.7 L936.8,760.2 L935.1,758.8 L933.5,757.3 L931.8,755.9 L930.1,754.4 L928.4,752.9 L926.7,751.4 L925.1,749.9 L923.4,748.3 L921.7,746.8 L920.1,745.3 L918.4,743.7 L916.8,742.1 L915.1,740.5 L913.5,738.9 L911.9,737.3 L910.3,735.7 L908.6,734.0 L907.0,732.4 L905.4,730.7 L903.8,729.0 L902.2,727.3 L900.6,725.6 L899.0,723.9 L897.5,722.2 L895.9,720.4 L894.3,718.7 L892.8,716.9 L891.2,715.1 L889.7,713.3 L888.1,711.5 L886.6,709.7 L885.1,707.8 L883.5,706.0 L882.0,704.1 L880.5,702.2 L879.0,700.3 L877.5,698.4 L876.0,696.5 L874.5,694.6 L873.0,692.6 L871.6,690.7 L870.1,688.7 L868.6,686.7 L867.2,684.7 L865.8,682.7 L864.3,680.6 L862.9,678.6 L861.5,676.5 L860.0,674.5 L858.6,672.4 L857.2,670.3 L855.8,668.1 L854.4,666.0 L853.1,663.9 L851.7,661.7 L850.3,659.5 L849.0,657.3 L847.6,655.1 L846.3,652.9 L844.9,650.6 L843.6,648.4 L842.3,646.1 L841.0,643.8 L839.7,641.5 L838.4,639.2 L837.1,636.8 L835.8,634.5 L834.6,632.1 L833.3,629.7 L832.1,627.3 L830.8,624.9 L829.6,622.5 L828.4,620.0 L827.1,617.5 L825.9,615.1 L824.8,612.5 L823.6,610.0 L822.4,607.5 L821.2,604.9 L820.1,602.3 L818.9,599.8 L817.8,597.1 L816.7,594.5 L815.6,591.9 L814.4,589.2 L813.4,586.5 L812.3,583.8 L811.2,581.1 L810.1,578.3 L809.1,575.6 L808.1,572.8 L807.0,570.0 L806.0,567.1 L805.0,564.3 L804.0,561.4 L803.1,558.6 L802.1,555.7 L801.1,552.7 L800.2,549.8 L799.3,546.8 L798.4,543.8 L797.5,540.8 L796.6,537.8 L795.7,534.7 L794.9,531.6 L794.0,528.5 L793.2,525.4 L792.4,522.3 L791.6,519.1 L790.8,515.9 L790.1,512.7 L785.8,492.8 L779.4,450.4 L776.4,403.7 L777.8,352.2 L785.2,295.2 L790.7,269.7 L791.9,264.5 L793.3,259.2 L794.7,253.9 L796.2,248.6 L797.8,243.2 L799.4,237.7 L801.1,232.3 L802.9,226.7 L804.8,221.2 L829.2,163.3 L874.9,89.9 L945.5,17.6 L1046.4,-40.2 L1171.3,-63.2 Z" fill="#ff7f50" fill-opacity="0.3"/>
<path d="M1075.3,743.0 L1078.7,743.0 L1082.1,743.0 L1085.5,743.1 L1088.9,743.3 L1092.3,743.4 L1095.7,743.6 L1099.1,743.9 L1102.5,744.2 L1105.9,744.5 L1109.3,744.8 L1112.6,745.2 L1116.0,745.7 L1119.4,746.1 L1122.7,746.6 L1126.1,747.2 L1129.4,747.8 L1132.7,748.4 L1136.0,749.0 L1139.3,749.7 L1142.6,750.4 L1145.9,751.2 L1149.2,752.0 L1152.4,752.8 L1155.7,753.7 L1158.9,754.6 L1162.1,755.5 L1165.3,756.4 L1168.5,757.4 L1171.7,758.5 L1174.8,759.5 L1178.0,760.6 L1181.1,761.7 L1184.2,762.9 L1187.3,764.1 L1190.4,765.3 L1193.5,766.5 L1196.5,767.8 L1199.5,769.1 L1202.5,770.4 L1205.5,771.8 L1208.5,773.2 L1211.4,774.6 L1214.3,776.1 L1217.2,777.5 L1220.1,779.0 L1223.0,780.6 L1225.8,782.1 L1228.6,783.7 L1231.4,785.3 L1234.2,786.9 L1237.0,788.5 L1239.7,790.2 L1242.4,791.9 L1245.1,793.6 L1247.8,795.4 L1250.4,797.1 L1253.1,798.9 L1255.7,800.7 L1258.2,802.6 L1260.8,804.4 L1263.3,806.3 L1265.8,808.2 L1268.3,810.1 L1270.8,812.0 L1273.2,813.9 L1275.6,815.9 L1278.0,817.9 L1280.4,819.9 L1282.7,821.9 L1285.1,823.9 L1287.4,826.0 L1289.6,828.0 L1291.9,830.1 L1294.1,832.2 L1296.3,834.3 L1298.5,836.4 L1300.6,838.6 L1302.8,840.7 L1304.9,842.9 L1307.0,845.1 L1309.0,847.2 L1311.1,849.5 L1313.1,851.7 L1315.1,853.9 L1317.0,856.1 L1319.0,858.4 L1320.9,860.7 L1322.8,862.9 L1324.7,865.2 L1326.5,867.5 L1328.4,869.8 L1330.2,872.1 L1332.0,874.5 L1333.7,876.8 L1335.5,879.1 L1337.2,881.5 L1338.9,883.8 L1340.6,886.2 L1342.2,888.6 L1343.8,891.0 L1345.4,893.4 L1347.0,895.8 L1348.6,898.2 L1350.1,900.6 L1351.6,903.0 L1353.1,905.5 L1354.6,907.9 L1356.1,910.3 L1357.5,912.8 L1358.9,915.2 L1360.3,917.7 L1361.7,920.2 L1363.0,922.7 L1364.4,925.1 L1365.7,927.6 L1367.0,930.1 L1368.2,932.6 L1369.5,935.1 L1370.7,937.6 L1371.9,940.1 L1373.1,942.6 L1374.3,945.2 L1375.4,947.7 L1376.5,950.2 L1377.6,952.8 L1378.7,955.3 L1379.8,957.8 L1380.8,960.4 L1381.9,962.9 L1382.9,965.5 L1383.9,968.0 L1384.8,970.6 L1385.8,973.2 L1386.7,975.7 L1387.6,978.3 L1388.5,980.9 L1389.4,983.5 L1390.2,986.0 L1391.1,988.6 L1391.9,991.2 L1392.7,993.8 L1393.5,996.4 L1394.3,999.0 L1395.0,1001.6 L1395.7,1004.2 L1396.4,1006.8 L1397.1,1009.4 L1397.8,1012.0 L1398.5,1014.6 L1399.1,1017.2 L1399.7,1019.8 L1400.3,1022.4 L1400.9,1025.1 L1401.5,1027.7 L1402.0,1030.3 L1402.5,1032.9 L1403.0,1035.6 L1403.5,1038.2 L1404.0,1040.8 L1404.5,1043.4 L1404.9,1046.1 L1405.3,1048.7 L1405.8,1051.4 L1406.1,1054.0 L1406.5,1056.6 L1406.9,1059.3 L1407.2,1061.9 L1407.5,1064.6 L1407.8,1067.2 L1408.1,1069.9 L1408.4,1072.5 L1408.6,1075.2 L1408.9,1077.8 L1409.1,1080.5 L1409.3,1083.1 L1409.5,1085.8 L1409.6,1088.5 L1409.8,1091.1 L1409.9,1093.8 L1410.0,1096.5 L1410.1,1099.1 L1410.2,1101.8 L1410.3,1104.5 L1410.3,1107.1 L1410.3,1109.8 L1410.3,1112.5 L1410.3,1115.1 L1410.3,1117.8 L1410.3,1120.5 L1410.2,1123.2 L1410.1,1125.9 L1410.0,1128.5 L1407.5,1160.8 L1402.4,1193.1 L1394.5,1225.5 L1383.6,1257.8 L1369.6,1289.9 L1352.1,1321.4 L1330.9,1352.1 L1305.8,1381.4 L1276.4,1408.6 L1242.9,1433.0 L1205.3,1453.5 L1164.2,1469.1 L1120.5,1478.9 L1075.3,1482.2 L1030.2,1478.9 L986.5,1469.1 L945.4,1453.5 L907.8,1433.0 L874.3,1408.6 L844.9,1381.4 L819.8,1352.1 L798.6,1321.4 L781.1,1289.9 L767.1,1257.8 L756.2,1225.5 L748.3,1193.1 L743.2,1160.8 L740.6,1128.5 L740.7,1096.5 L743.2,1064.6 L748.1,1032.9 L755.7,1001.6 L765.9,970.6 L778.8,940.1 L790.4,917.7 L791.8,915.2 L793.2,912.8 L794.6,910.3 L796.1,907.9 L797.5,905.5 L799.0,903.0 L800.6,900.6 L802.1,898.2 L803.7,895.8 L805.2,893.4 L806.9,891.0 L808.5,888.6 L810.1,886.2 L811.8,883.8 L813.5,881.5 L815.2,879.1 L817.0,876.8 L818.7,874.5 L820.5,872.1 L822.3,869.8 L824.1,867.5 L826.0,865.2 L827.9,862.9 L829.8,860.7 L831.7,858.4 L833.6,856.1 L835.6,853.9 L837.6,851.7 L839.6,849.5 L841.7,847.2 L843.7,845.1 L845.8,842.9 L847.9,840.7 L850.0,838.6 L852.2,836.4 L854.4,834.3 L856.6,832.2 L858.8,830.1 L861.1,828.0 L863.3,826.0 L865.6,823.9 L868.0,821.9 L870.3,819.9 L872.7,817.9 L875.1,815.9 L877.5,813.9 L879.9,812.0 L882.4,810.1 L884.9,808.2 L887.4,806.3 L889.9,804.4 L892.4,802.6 L895.0,800.7 L897.6,798.9 L900.2,797.1 L902.9,795.4 L905.6,793.6 L908.3,791.9 L911.0,790.2 L913.7,788.5 L916.5,786.9 L919.2,785.3 L922.0,783.7 L924.9,782.1 L927.7,780.6 L930.6,779.0 L933.4,777.5 L936.4,776.1 L939.3,774.6 L942.2,773.2 L945.2,771.8 L948.2,770.4 L951.2,769.1 L954.2,767.8 L957.2,766.5 L960.3,765.3 L963.4,764.1 L966.5,762.9 L969.6,761.7 L972.7,760.6 L975.8,759.5 L979.0,758.5 L982.2,757.4 L985.4,756.4 L988.6,755.5 L991.8,754.6 L995.0,753.7 L998.3,752.8 L1001.5,752.0 L1004.8,751.2 L1008.1,750.4 L1011.4,749.7 L1014.7,749.0 L1018.0,748.4 L1021.3,747.8 L1024.6,747.2 L1028.0,746.6 L1031.3,746.1 L1034.7,745.7 L1038.0,745.2 L1041.4,744.8 L1044.8,744.5 L1048.2,744.2 L1051.6,743.9 L1054.9,743.6 L1058.3,743.4 L1061.7,743.3 L1065.1,743.1 L1068.5,743.0 L1071.9,743.0 L1075.3,743.0 Z" fill="#ff7f50" fill-opacity="0.3"/>
<path d="M1339.8,558.8 L1342.6,558.8 L1345.3,558.9 L1348.1,559.0 L1350.9,559.1 L1353.7,559.3 L1356.5,559.5 L1359.2,559.7 L1362.0,560.0 L1364.8,560.3 L1367.5,560.6 L1370.3,561.0 L1373.0,561.4 L1375.8,561.8 L1378.5,562.3 L1381.2,562.8 L1383.9,563.4 L1386.6,564.0 L1389.3,564.6 L1392.0,565.2 L1394.6,565.9 L1397.3,566.6 L1399.9,567.4 L1402.6,568.1 L1405.2,569.0 L1407.8,569.8 L1410.4,570.7 L1413.0,571.6 L1415.5,572.5 L1418.0,573.5 L1420.6,574.5 L1423.1,575.5 L1425.6,576.5 L1428.0,577.6 L1430.5,578.7 L1432.9,579.9 L1435.3,581.0 L1437.7,582.2 L1440.1,583.4 L1442.5,584.7 L1444.8,586.0 L1447.1,587.2 L1449.4,588.6 L1451.7,589.9 L1454.0,591.3 L1456.2,592.7 L1458.4,594.1 L1460.6,595.5 L1462.8,597.0 L1464.9,598.4 L1467.0,599.9 L1469.1,601.5 L1471.2,603.0 L1473.2,604.6 L1475.3,606.1 L1477.3,607.7 L1479.3,609.3 L1481.2,611.0 L1483.2,612.6 L1485.1,614.3 L1487.0,616.0 L1488.8,617.7 L1490.7,619.4 L1492.5,621.1 L1494.3,622.9 L1496.0,624.6 L1497.8,626.4 L1499.5,628.2 L1501.2,630.0 L1502.8,631.8 L1504.5,633.6 L1506.1,635.5 L1507.7,637.3 L1509.3,639.2 L1510.8,641.0 L1512.3,642.9 L1513.8,644.8 L1515.3,646.7 L1516.8,648.6 L1518.2,650.5 L1519.6,652.5 L1521.0,654.4 L1522.3,656.3 L1523.7,658.3 L1525.0,660.2 L1526.2,662.2 L1527.5,664.2 L1528.7,666.2 L1530.0,668.1 L1531.1,670.1 L1532.3,672.1 L1533.5,674.1 L1534.6,676.1 L1535.7,678.1 L1536.7,680.2 L1537.8,682.2 L1538.8,684.2 L1539.8,686.2 L1540.8,688.2 L1541.8,690.3 L1542.7,692.3 L1543.6,694.3 L1544.5,696.4 L1545.4,698.4 L1546.3,700.5 L1547.1,702.5 L1547.9,704.6 L1548.7,706.6 L1549.5,708.6 L1550.2,710.7 L1551.0,712.7 L1551.7,714.8 L1552.3,716.8 L1553.0,718.9 L1553.7,720.9 L1554.3,723.0 L1554.9,725.0 L1555.5,727.1 L1556.0,729.1 L1556.6,731.2 L1557.1,733.2 L1557.6,735.3 L1558.1,737.3 L1558.6,739.3 L1559.0,741.4 L1559.5,743.4 L1559.9,745.5 L1560.3,747.5 L1560.7,749.5 L1561.0,751.5 L1561.4,753.6 L1561.7,755.6 L1562.0,757.6 L1562.3,759.6 L1562.6,761.6 L1562.8,763.7 L1563.1,765.7 L1563.3,767.7 L1563.5,769.7 L1563.7,771.7 L1563.8,773.7 L1564.0,775.7 L1564.1,777.6 L1564.2,779.6 L1564.3,781.6 L1564.4,783.6 L1564.5,785.5 L1564.5,787.5 L1564.6,789.5 L1564.6,791.4 L1564.6,793.4 L1564.6,795.3 L1564.6,797.3 L1564.5,799.2 L1564.5,801.2 L1564.4,803.1 L1564.3,805.0 L1564.2,806.9 L1564.1,808.8 L1564.0,810.7 L1563.9,812.7 L1563.7,814.5 L1563.5,816.4 L1563.3,818.3 L1563.1,820.2 L1562.9,822.1 L1562.7,824.0 L1562.4,825.8 L1562.2,827.7 L1561.9,829.5 L1561.6,831.4 L1561.3,833.2 L1561.0,835.1 L1560.7,836.9 L1560.4,838.7 L1560.0,840.5 L1559.6,842.4 L1559.3,844.2 L1558.9,846.0 L1558.5,847.8 L1558.1,849.5 L1557.6,851.3 L1557.2,853.1 L1556.7,854.9 L1556.3,856.6 L1555.8,858.4 L1555.3,860.1 L1554.8,861.9 L1554.3,863.6 L1553.8,865.3 L1553.2,867.1 L1552.7,868.8 L1552.1,870.5 L1551.5,872.2 L1550.9,873.9 L1550.3,875.6 L1549.7,877.2 L1549.1,878.9 L1548.5,880.6 L1547.8,882.2 L1547.2,883.9 L1546.5,885.5 L1545.8,887.2 L1545.1,888.8 L1544.4,890.4 L1543.7,892.0 L1543.0,893.6 L1542.3,895.2 L1541.5,896.8 L1540.8,898.4 L1540.0,900.0 L1539.2,901.6 L1538.4,903.1 L1537.6,904.7 L1536.8,906.2 L1536.0,907.8 L1535.2,909.3 L1534.4,910.8 L1533.5,912.3 L1532.7,913.8 L1531.8,915.3 L1530.9,916.8 L1530.0,918.3 L1529.1,919.8 L1528.2,921.3 L1527.3,922.7 L1526.4,924.2 L1525.4,925.6 L1524.5,927.0 L1523.5,928.5 L1522.6,929.9 L1521.6,931.3 L1520.6,932.7 L1519.6,934.1 L1518.6,935.5 L1517.6,936.8 L1516.6,938.2 L1515.5,939.6 L1514.5,940.9 L1513.5,942.3 L1512.4,943.6 L1511.3,944.9 L1510.3,946.2 L1509.2,947.5 L1508.1,948.8 L1507.0,950.1 L1505.9,951.4 L1504.8,952.6 L1503.6,953.9 L1502.5,955.2 L1501.3,956.4 L1500.2,957.6 L1499.0,958.8 L1497.9,960.1 L1496.7,961.3 L1495.5,962.5 L1494.3,963.6 L1493.1,964.8 L1491.9,966.0 L1490.7,967.1 L1489.5,968.3 L1488.2,969.4 L1487.0,970.5 L1485.8,971.7 L1484.5,972.8 L1483.2,973.9 L1482.0,974.9 L1480.7,976.0 L1479.4,977.1 L1478.1,978.2 L1476.8,979.2 L1475.5,980.2 L1474.2,981.3 L1472.9,982.3 L1471.6,983.3 L1470.2,984.3 L1468.9,985.3 L1467.6,986.2 L1466.2,987.2 L1464.9,988.2 L1463.5,989.1 L1462.1,990.0 L1460.7,991.0 L1459.4,991.9 L1458.0,992.8 L1456.6,993.7 L1455.2,994.6 L1453.8,995.4 L1452.3,996.3 L1450.9,997.1 L1449.5,998.0 L1448.1,998.8 L1446.6,999.6 L1445.2,1000.4 L1443.7,1001.2 L1442.3,1002.0 L1440.8,1002.8 L1439.4,1003.5 L1437.9,1004.3 L1436.4,1005.0 L1434.9,1005.7 L1433.5,1006.5 L1432.0,1007.2 L1430.5,1007.9 L1429.0,1008.5 L1427.5,1009.2 L1426.0,1009.9 L1424.4,1010.5 L1422.9,1011.1 L1421.4,1011.8 L1419.9,1012.4 L1418.3,1013.0 L1416.8,1013.6 L1415.3,1014.2 L1413.7,1014.7 L1412.2,1015.3 L1410.6,1015.8 L1409.1,1016.4 L1407.5,1016.9 L1405.9,1017.4 L1404.4,1017.9 L1402.8,1018.4 L1401.2,1018.8 L1399.7,1019.3 L1398.1,1019.7 L1396.5,1020.2 L1394.9,1020.6 L1393.3,1021.0 L1391.7,1021.4 L1390.1,1021.8 L1388.5,1022.2 L1386.9,1022.5 L1385.3,1022.9 L1383.7,1023.2 L1382.1,1023.6 L1380.5,1023.9 L1378.9,1024.2 L1377.3,1024.5 L1375.7,1024.7 L1374.0,1025.0 L1372.4,1025.3 L1370.8,1025.5 L1369.2,1025.7 L1367.6,1026.0 L1365.9,1026.2 L1364.3,1026.4 L1362.7,1026.5 L1361.0,1026.7 L1359.4,1026.9 L1357.8,1027.0 L1356.1,1027.1 L1354.5,1027.2 L1352.9,1027.4 L1351.2,1027.4 L1349.6,1027.5 L1348.0,1027.6 L1346.3,1027.6 L1344.7,1027.7 L1343.1,1027.7 L1341.4,1027.7 L1339.8,1027.7 L1338.1,1027.7 L1336.5,1027.7 L1334.9,1027.7 L1333.2,1027.6 L1331.6,1027.6 L1329.9,1027.5 L1328.3,1027.4 L1326.7,1027.4 L1325.0,1027.2 L1323.4,1027.1 L1321.8,1027.0 L1320.1,1026.9 L1318.5,1026.7 L1316.9,1026.5 L1315.2,1026.4 L1313.6,1026.2 L1312.0,1026.0 L1310.4,1025.7 L1308.7,1025.5 L1307.1,1025.3 L1305.5,1025.0 L1303.9,1024.7 L1302.3,1024.5 L1300.6,1024.2 L1299.0,1023.9 L1297.4,1023.6 L1295.8,1023.2 L1294.2,1022.9 L1292.6,1022.5 L1291.0,1022.2 L1289.4,1021.8 L1287.8,1021.4 L1286.2,1021.0 L1284.6,1020.6 L1283.1,1020.2 L1281.5,1019.7 L1279.9,1019.3 L1278.3,1018.8 L1276.7,1018.4 L1275.2,1017.9 L1273.6,1017.4 L1272.0,1016.9 L1270.5,1016.4 L1268.9,1015.8 L1267.4,1015.3 L1265.8,1014.7 L1264.3,1014.2 L1262.7,1013.6 L1261.2,1013.0 L1259.7,1012.4 L1258.1,1011.8 L1256.6,1011.1 L1255.1,1010.5 L1253.6,1009.9 L1252.1,1009.2 L1250.6,1008.5 L1249.1,1007.9 L1247.6,1007.2 L1246.1,1006.5 L1244.6,1005.7 L1243.1,1005.0 L1241.7,1004.3 L1240.2,1003.5 L1238.7,1002.8 L1237.3,1002.0 L1235.8,1001.2 L1234.4,1000.4 L1232.9,999.6 L1231.5,998.8 L1230.0,998.0 L1228.6,997.1 L1227.2,996.3 L1225.8,995.4 L1224.4,994.6 L1223.0,993.7 L1221.6,992.8 L1220.2,991.9 L1218.8,991.0 L1217.4,990.0 L1216.1,989.1 L1214.7,988.2 L1213.3,987.2 L1212.0,986.2 L1210.6,985.3 L1209.3,984.3 L1208.0,983.3 L1206.6,982.3 L1205.3,981.3 L1204.0,980.2 L1202.7,979.2 L1201.4,978.2 L1200.1,977.1 L1198.8,976.0 L1197.6,974.9 L1196.3,973.9 L1195.0,972.8 L1193.8,971.7 L1192.5,970.5 L1191.3,969.4 L1190.1,968.3 L1188.8,967.1 L1187.6,966.0 L1186.4,964.8 L1185.2,963.6 L1184.0,962.5 L1182.9,961.3 L1181.7,960.1 L1180.5,958.8 L1179.4,957.6 L1178.2,956.4 L1177.1,955.2 L1175.9,953.9 L1174.8,952.6 L1173.7,951.4 L1172.6,950.1 L1171.5,948.8 L1170.4,947.5 L1169.3,946.2 L1168.2,944.9 L1167.2,943.6 L1166.1,942.3 L1165.0,940.9 L1164.0,939.6 L1163.0,938.2 L1162.0,936.8 L1160.9,935.5 L1159.9,934.1 L1158.9,932.7 L1158.0,931.3 L1157.0,929.9 L1156.0,928.5 L1155.1,927.0 L1154.1,925.6 L1153.2,924.2 L1152.3,922.7 L1151.3,921.3 L1150.4,919.8 L1149.5,918.3 L1148.6,916.8 L1147.8,915.3 L1146.9,913.8 L1146.0,912.3 L1145.2,910.8 L1144.4,909.3 L1143.5,907.8 L1142.7,906.2 L1141.9,904.7 L1141.1,903.1 L1140.3,901.6 L1139.5,900.0 L1138.8,898.4 L1138.0,896.8 L1137.3,895.2 L1136.5,893.6 L1135.8,892.0 L1135.1,890.4 L1134.4,888.8 L1133.7,887.2 L1133.0,885.5 L1132.4,883.9 L1131.7,882.2 L1131.1,880.6 L1130.4,878.9 L1129.8,877.2 L1129.2,875.6 L1128.6,873.9 L1128.0,872.2 L1127.4,870.5 L1126.9,868.8 L1126.3,867.1 L1125.8,865.3 L1125.3,863.6 L1124.8,861.9 L1124.2,860.1 L1123.8,858.4 L1123.3,856.6 L1122.8,854.9 L1122.4,853.1 L1121.9,851.3 L1121.5,849.5 L1121.1,847.8 L1120.7,846.0 L1120.3,844.2 L1119.9,842.4 L1119.5,840.5 L1119.2,838.7 L1118.8,836.9 L1118.5,835.1 L1118.2,833.2 L1117.9,831.4 L1117.6,829.5 L1117.4,827.7 L1117.1,825.8 L1116.9,824.0 L1116.6,822.1 L1116.4,820.2 L1116.2,818.3 L1116.0,816.4 L1115.9,814.5 L1115.7,812.7 L1115.6,810.7 L1115.4,808.8 L1115.3,806.9 L1115.2,805.0 L1115.1,803.1 L1115.1,801.2 L1115.0,799.2 L1115.0,797.3 L1114.9,795.3 L1114.9,793.4 L1114.9,791.4 L1115.0,789.5 L1115.0,787.5 L1115.1,785.5 L1115.1,783.6 L1115.2,781.6 L1115.3,779.6 L1115.4,777.6 L1115.6,775.7 L1115.7,773.7 L1115.9,771.7 L1116.1,769.7 L1116.3,767.7 L1116.5,765.7 L1116.7,763.7 L1117.0,761.6 L1117.3,759.6 L1117.5,757.6 L1117.8,755.6 L1118.2,753.6 L1118.5,751.5 L1118.9,749.5 L1119.3,747.5 L1119.7,745.5 L1120.1,743.4 L1120.5,741.4 L1121.0,739.3 L1121.4,737.3 L1121.9,735.3 L1122.4,733.2 L1123.0,731.2 L1123.5,729.1 L1124.1,727.1 L1124.7,725.0 L1125.3,723.0 L1125.9,720.9 L1126.5,718.9 L1127.2,716.8 L1127.9,714.8 L1128.6,712.7 L1129.3,710.7 L1130.1,708.6 L1130.8,706.6 L1131.6,704.6 L1132.4,702.5 L1133.3,700.5 L1134.1,698.4 L1135.0,696.4 L1135.9,694.3 L1136.8,692.3 L1137.8,690.3 L1138.7,688.2 L1139.7,686.2 L1140.7,684.2 L1141.8,682.2 L1142.8,680.2 L1143.9,678.1 L1145.0,676.1 L1146.1,674.1 L1147.2,672.1 L1148.4,670.1 L1149.6,668.1 L1150.8,666.2 L1152.0,664.2 L1153.3,662.2 L1154.6,660.2 L1155.9,658.3 L1157.2,656.3 L1158.6,654.4 L1160.0,652.5 L1161.4,650.5 L1162.8,648.6 L1164.2,646.7 L1165.7,644.8 L1167.2,642.9 L1168.7,641.0 L1170.3,639.2 L1171.8,637.3 L1173.4,635.5 L1175.1,633.6 L1176.7,631.8 L1178.4,630.0 L1180.1,628.2 L1181.8,626.4 L1183.5,624.6 L1185.3,622.9 L1187.1,621.1 L1188.9,619.4 L1190.7,617.7 L1192.6,616.0 L1194.5,614.3 L1196.4,612.6 L1198.3,611.0 L1200.3,609.3 L1202.3,607.7 L1204.3,606.1 L1206.3,604.6 L1208.4,603.0 L1210.4,601.5 L1212.5,599.9 L1214.6,598.4 L1216.8,597.0 L1219.0,595.5 L1221.1,594.1 L1223.4,592.7 L1225.6,591.3 L1227.8,589.9 L1230.1,588.6 L1232.4,587.2 L1234.7,586.0 L1237.1,584.7 L1239.4,583.4 L1241.8,582.2 L1244.2,581.0 L1246.6,579.9 L1249.1,578.7 L1251.5,577.6 L1254.0,576.5 L1256.5,575.5 L1259.0,574.5 L1261.5,573.5 L1264.0,572.5 L1266.6,571.6 L1269.2,570.7 L1271.8,569.8 L1274.4,569.0 L1277.0,568.1 L1279.6,567.4 L1282.2,566.6 L1284.9,565.9 L1287.6,565.2 L1290.2,564.6 L1292.9,564.0 L1295.6,563.4 L1298.3,562.8 L1301.1,562.3 L1303.8,561.8 L1306.5,561.4 L1309.3,561.0 L1312.0,560.6 L1314.8,560.3 L1317.5,560.0 L1320.3,559.7 L1323.1,559.5 L1325.9,559.3 L1328.6,559.1 L1331.4,559.0 L1334.2,558.9 L1337.0,558.8 L1339.8,558.8 Z" fill="#ff7f50" fill-opacity="0.3"/>
<path d="M1554.0,390.6 L1558.7,390.7 L1563.5,390.8 L1568.2,391.0 L1573.0,391.3 L1577.7,391.7 L1582.5,392.1 L1587.2,392.6 L1591.9,393.2 L1596.6,393.9 L1601.3,394.6 L1605.9,395.5 L1610.5,396.4 L1615.1,397.4 L1619.7,398.4 L1624.3,399.6 L1628.8,400.8 L1633.3,402.0 L1637.7,403.4 L1642.2,404.8 L1646.6,406.3 L1650.9,407.8 L1655.2,409.4 L1659.5,411.1 L1663.7,412.8 L1667.9,414.6 L1672.0,416.4 L1676.1,418.4 L1710.9,437.9 L1750.8,469.0 L1783.2,503.8 L1808.6,540.3 L1827.6,577.3 L1841.3,613.9 L1850.3,649.6 L1855.4,684.0 L1857.1,717.0 L1855.9,748.5 L1852.0,778.5 L1846.0,807.1 L1837.8,834.1 L1827.8,859.7 L1816.1,883.8 L1802.7,906.5 L1787.9,927.7 L1771.6,947.3 L1754.1,965.4 L1735.3,981.8 L1715.4,996.6 L1694.4,1009.6 L1679.9,1017.2 L1678.0,1018.1 L1676.2,1019.0 L1674.3,1019.9 L1672.5,1020.8 L1670.6,1021.6 L1668.8,1022.4 L1666.9,1023.3 L1665.0,1024.1 L1663.1,1024.9 L1661.2,1025.6 L1659.3,1026.4 L1657.4,1027.1 L1655.5,1027.9 L1653.6,1028.6 L1651.7,1029.3 L1649.8,1030.0 L1647.9,1030.7 L1645.9,1031.4 L1644.0,1032.0 L1642.1,1032.7 L1640.1,1033.3 L1638.2,1033.9 L1636.2,1034.5 L1634.3,1035.1 L1632.3,1035.7 L1630.4,1036.2 L1628.4,1036.8 L1626.4,1037.3 L1624.5,1037.8 L1622.5,1038.3 L1620.5,1038.8 L1618.5,1039.3 L1616.5,1039.7 L1614.6,1040.2 L1612.6,1040.6 L1610.6,1041.0 L1608.6,1041.4 L1606.6,1041.8 L1604.6,1042.2 L1602.6,1042.5 L1600.6,1042.9 L1598.5,1043.2 L1596.5,1043.5 L1594.5,1043.8 L1592.5,1044.1 L1590.5,1044.4 L1588.5,1044.6 L1586.5,1044.9 L1584.4,1045.1 L1582.4,1045.3 L1580.4,1045.5 L1578.4,1045.7 L1576.3,1045.9 L1574.3,1046.0 L1572.3,1046.2 L1570.2,1046.3 L1568.2,1046.4 L1566.2,1046.5 L1564.1,1046.6 L1562.1,1046.6 L1560.1,1046.7 L1558.0,1046.7 L1556.0,1046.8 L1554.0,1046.8 L1551.9,1046.8 L1549.9,1046.7 L1547.9,1046.7 L1545.8,1046.6 L1543.8,1046.6 L1541.8,1046.5 L1539.7,1046.4 L1537.7,1046.3 L1535.7,1046.2 L1533.6,1046.0 L1531.6,1045.9 L1529.6,1045.7 L1527.5,1045.5 L1525.5,1045.3 L1523.5,1045.1 L1521.5,1044.9 L1519.5,1044.6 L1517.4,1044.4 L1515.4,1044.1 L1513.4,1043.8 L1511.4,1043.5 L1509.4,1043.2 L1507.4,1042.9 L1505.4,1042.5 L1503.4,1042.2 L1501.4,1041.8 L1499.4,1041.4 L1497.4,1041.0 L1495.4,1040.6 L1493.4,1040.2 L1491.4,1039.7 L1489.4,1039.3 L1487.4,1038.8 L1485.4,1038.3 L1483.5,1037.8 L1481.5,1037.3 L1479.5,1036.8 L1477.6,1036.2 L1475.6,1035.7 L1473.6,1035.1 L1471.7,1034.5 L1469.7,1033.9 L1467.8,1033.3 L1465.9,1032.7 L1463.9,1032.0 L1462.0,1031.4 L1460.1,1030.7 L1458.1,1030.0 L1456.2,1029.3 L1454.3,1028.6 L1452.4,1027.9 L1450.5,1027.1 L1448.6,1026.4 L1446.7,1025.6 L1444.8,1024.9 L1442.9,1024.1 L1441.0,1023.3 L1439.2,1022.4 L1437.3,1021.6 L1435.4,1020.8 L1433.6,1019.9 L1431.7,1019.0 L1429.9,1018.1 L1428.0,1017.2 L1426.2,1016.3 L1424.4,1015.4 L1422.6,1014.5 L1420.7,1013.5 L1418.9,1012.6 L1417.1,1011.6 L1415.3,1010.6 L1413.5,1009.6 L1411.8,1008.6 L1410.0,1007.6 L1408.2,1006.5 L1406.4,1005.5 L1404.7,1004.4 L1402.9,1003.3 L1401.2,1002.2 L1399.5,1001.1 L1397.7,1000.0 L1396.0,998.9 L1394.3,997.8 L1392.6,996.6 L1390.9,995.4 L1389.2,994.3 L1387.5,993.1 L1385.8,991.9 L1384.1,990.7 L1382.5,989.4 L1380.8,988.2 L1379.2,986.9 L1377.5,985.7 L1375.9,984.4 L1374.3,983.1 L1372.6,981.8 L1371.0,980.5 L1369.4,979.2 L1367.8,977.9 L1366.2,976.5 L1364.7,975.2 L1363.1,973.8 L1361.5,972.4 L1360.0,971.1 L1358.4,969.7 L1356.9,968.2 L1355.4,966.8 L1353.8,965.4 L1352.3,963.9 L1350.8,962.5 L1349.3,961.0 L1347.8,959.5 L1346.4,958.0 L1344.9,956.5 L1343.4,955.0 L1342.0,953.5 L1340.6,952.0 L1339.1,950.4 L1337.7,948.9 L1336.3,947.3 L1334.9,945.7 L1333.5,944.1 L1332.1,942.5 L1330.7,940.9 L1329.3,939.3 L1328.0,937.7 L1326.6,936.0 L1325.3,934.4 L1324.0,932.7 L1322.7,931.0 L1321.3,929.4 L1320.0,927.7 L1318.7,926.0 L1317.5,924.2 L1316.2,922.5 L1314.9,920.8 L1313.7,919.0 L1312.4,917.3 L1311.2,915.5 L1310.0,913.7 L1308.8,911.9 L1307.6,910.1 L1306.4,908.3 L1305.2,906.5 L1304.0,904.7 L1302.9,902.8 L1301.7,901.0 L1300.6,899.1 L1299.5,897.2 L1298.3,895.4 L1297.2,893.5 L1296.1,891.6 L1295.1,889.6 L1294.0,887.7 L1292.9,885.8 L1291.9,883.8 L1290.8,881.9 L1289.8,879.9 L1288.8,877.9 L1287.8,876.0 L1286.8,874.0 L1285.8,872.0 L1284.8,869.9 L1283.9,867.9 L1282.9,865.9 L1282.0,863.8 L1281.0,861.8 L1280.1,859.7 L1279.2,857.6 L1278.3,855.5 L1277.5,853.4 L1276.6,851.3 L1275.7,849.2 L1274.9,847.1 L1274.1,845.0 L1273.3,842.8 L1272.4,840.7 L1271.7,838.5 L1270.9,836.3 L1270.1,834.1 L1269.4,831.9 L1268.6,829.7 L1267.9,827.5 L1267.2,825.3 L1266.5,823.0 L1265.8,820.8 L1265.1,818.5 L1264.5,816.2 L1263.8,814.0 L1263.2,811.7 L1262.6,809.4 L1262.0,807.1 L1261.4,804.7 L1260.8,802.4 L1260.2,800.1 L1259.7,797.7 L1259.2,795.3 L1258.7,793.0 L1258.2,790.6 L1257.7,788.2 L1257.2,785.8 L1256.7,783.4 L1256.3,780.9 L1255.9,778.5 L1255.5,776.1 L1255.1,773.6 L1254.7,771.1 L1254.3,768.7 L1254.0,766.2 L1253.7,763.7 L1253.4,761.2 L1253.1,758.7 L1252.8,756.1 L1252.5,753.6 L1252.3,751.0 L1252.1,748.5 L1251.9,745.9 L1251.7,743.3 L1251.5,740.7 L1251.4,738.1 L1251.2,735.5 L1251.1,732.9 L1251.0,730.3 L1250.9,727.6 L1250.9,725.0 L1250.8,722.3 L1250.8,719.6 L1250.8,717.0 L1250.9,714.3 L1250.9,711.6 L1251.0,708.8 L1251.0,706.1 L1251.2,703.4 L1251.3,700.6 L1251.4,697.9 L1251.6,695.1 L1251.8,692.3 L1252.0,689.6 L1252.3,686.8 L1252.5,684.0 L1252.8,681.2 L1253.1,678.3 L1253.5,675.5 L1253.8,672.6 L1254.2,669.8 L1254.6,666.9 L1255.0,664.1 L1255.5,661.2 L1256.0,658.3 L1256.5,655.4 L1257.0,652.5 L1257.6,649.6 L1258.2,646.6 L1258.8,643.7 L1259.5,640.8 L1260.1,637.8 L1260.8,634.9 L1261.6,631.9 L1262.3,628.9 L1263.1,625.9 L1264.0,622.9 L1264.8,619.9 L1265.7,616.9 L1266.6,613.9 L1267.6,610.9 L1268.6,607.9 L1269.6,604.8 L1270.6,601.8 L1271.7,598.8 L1272.8,595.7 L1274.0,592.7 L1275.2,589.6 L1276.4,586.5 L1277.7,583.5 L1279.0,580.4 L1280.3,577.3 L1281.7,574.3 L1283.1,571.2 L1284.5,568.1 L1286.0,565.0 L1287.5,561.9 L1289.1,558.8 L1290.7,555.7 L1292.4,552.7 L1294.0,549.6 L1295.8,546.5 L1297.6,543.4 L1299.4,540.3 L1301.2,537.2 L1303.1,534.2 L1305.1,531.1 L1307.1,528.0 L1309.1,525.0 L1311.2,521.9 L1313.3,518.9 L1315.5,515.8 L1317.7,512.8 L1320.0,509.8 L1322.3,506.8 L1324.7,503.8 L1327.1,500.8 L1329.6,497.8 L1332.1,494.8 L1334.7,491.9 L1337.3,488.9 L1340.0,486.0 L1342.7,483.1 L1345.5,480.3 L1348.3,477.4 L1351.2,474.6 L1354.1,471.8 L1357.1,469.0 L1360.2,466.2 L1363.2,463.5 L1366.4,460.8 L1369.6,458.1 L1372.8,455.4 L1376.1,452.8 L1379.5,450.2 L1382.9,447.7 L1386.3,445.2 L1389.8,442.7 L1393.4,440.2 L1397.0,437.9 L1400.7,435.5 L1404.4,433.2 L1408.2,430.9 L1412.0,428.7 L1415.8,426.5 L1419.8,424.4 L1423.7,422.3 L1427.7,420.3 L1431.8,418.4 L1435.9,416.4 L1440.0,414.6 L1444.2,412.8 L1448.4,411.1 L1452.7,409.4 L1457.0,407.8 L1461.4,406.3 L1465.8,404.8 L1470.2,403.4 L1474.6,402.0 L1479.1,400.8 L1483.6,399.6 L1488.2,398.4 L1492.8,397.4 L1497.4,396.4 L1502.0,395.5 L1506.7,394.6 L1511.3,393.9 L1516.0,393.2 L1520.7,392.6 L1525.4,392.1 L1530.2,391.7 L1534.9,391.3 L1539.7,391.0 L1544.4,390.8 L1549.2,390.7 L1554.0,390.6 Z" fill="#ff7f50" fill-opacity="0.3"/>
<path d="M2007.2,-296.9 L2305.1,-180.7 L2444.5,-0.3 L2504.0,148.3 L2530.6,266.3 L2541.6,362.7 L2544.0,443.9 L2541.2,514.2 L2534.8,576.1 L2525.9,631.6 L2515.0,681.9 L2502.4,728.1 L2488.4,770.9 L2473.0,810.7 L2456.3,848.0 L2438.3,883.0 L2419.0,916.0 L2398.5,947.2 L2376.5,976.5 L2353.2,1004.2 L2328.4,1030.1 L2302.2,1054.2 L2274.4,1076.4 L2245.2,1096.6 L2214.5,1114.7 L2182.4,1130.4 L2149.1,1143.6 L2114.6,1154.1 L2079.3,1161.8 L2043.4,1166.4 L2007.2,1168.0 L1971.0,1166.4 L1935.1,1161.8 L1899.8,1154.1 L1865.4,1143.6 L1832.1,1130.4 L1800.0,1114.7 L1769.3,1096.6 L1740.1,1076.4 L1712.3,1054.2 L1686.1,1030.1 L1679.7,1023.8 L1677.7,1021.6 L1675.6,1019.5 L1673.5,1017.4 L1671.4,1015.2 L1669.4,1013.0 L1667.4,1010.8 L1665.3,1008.6 L1663.3,1006.4 L1661.3,1004.2 L1659.3,1001.9 L1657.3,999.7 L1655.3,997.4 L1653.4,995.2 L1651.4,992.9 L1649.4,990.6 L1647.5,988.3 L1645.6,985.9 L1643.7,983.6 L1641.7,981.3 L1639.8,978.9 L1638.0,976.5 L1636.1,974.2 L1634.2,971.8 L1632.3,969.4 L1630.5,966.9 L1628.7,964.5 L1626.8,962.1 L1625.0,959.6 L1623.2,957.2 L1621.4,954.7 L1619.6,952.2 L1617.8,949.7 L1616.0,947.2 L1614.3,944.6 L1612.5,942.1 L1610.7,939.5 L1609.0,937.0 L1607.3,934.4 L1605.6,931.8 L1603.9,929.2 L1602.2,926.6 L1600.5,924.0 L1598.8,921.3 L1597.1,918.7 L1595.4,916.0 L1593.8,913.3 L1592.1,910.6 L1590.5,907.9 L1588.9,905.2 L1587.3,902.5 L1585.6,899.7 L1584.0,897.0 L1582.5,894.2 L1580.9,891.4 L1579.3,888.6 L1577.7,885.8 L1576.2,883.0 L1574.6,880.2 L1573.1,877.3 L1571.6,874.4 L1570.0,871.5 L1568.5,868.6 L1567.0,865.7 L1565.5,862.8 L1564.0,859.9 L1562.6,856.9 L1561.1,853.9 L1559.6,851.0 L1558.2,848.0 L1556.8,844.9 L1555.3,841.9 L1553.9,838.9 L1552.5,835.8 L1551.1,832.7 L1549.7,829.6 L1548.3,826.5 L1546.9,823.4 L1545.6,820.2 L1544.2,817.1 L1542.8,813.9 L1541.5,810.7 L1540.2,807.5 L1538.8,804.2 L1537.5,801.0 L1536.2,797.7 L1534.9,794.4 L1533.6,791.1 L1532.4,787.8 L1531.1,784.4 L1529.8,781.1 L1528.6,777.7 L1527.3,774.3 L1526.1,770.9 L1524.9,767.4 L1523.7,764.0 L1522.5,760.5 L1521.3,757.0 L1520.1,753.4 L1518.9,749.9 L1517.7,746.3 L1516.6,742.7 L1515.4,739.1 L1514.3,735.5 L1513.2,731.8 L1512.1,728.1 L1510.9,724.4 L1509.8,720.7 L1508.8,716.9 L1507.7,713.1 L1506.6,709.3 L1505.6,705.5 L1504.5,701.6 L1503.5,697.7 L1502.5,693.8 L1501.5,689.9 L1500.5,685.9 L1499.5,681.9 L1498.5,677.9 L1497.5,673.8 L1496.6,669.8 L1495.6,665.6 L1494.7,661.5 L1493.8,657.3 L1492.9,653.1 L1492.0,648.9 L1491.1,644.6 L1490.3,640.3 L1489.4,635.9 L1488.6,631.6 L1487.7,627.1 L1486.9,622.7 L1486.1,618.2 L1485.4,613.7 L1484.6,609.1 L1483.8,604.5 L1483.1,599.9 L1482.4,595.2 L1481.7,590.5 L1481.0,585.7 L1480.3,580.9 L1479.7,576.1 L1479.0,571.2 L1478.4,566.2 L1477.8,561.3 L1477.2,556.2 L1476.7,551.1 L1476.1,546.0 L1475.6,540.8 L1475.1,535.6 L1474.6,530.3 L1474.2,525.0 L1473.7,519.6 L1473.3,514.2 L1472.9,508.7 L1472.6,503.1 L1472.2,497.5 L1471.9,491.8 L1471.6,486.0 L1471.4,480.2 L1471.2,474.4 L1471.0,468.4 L1470.8,462.4 L1470.7,456.3 L1470.6,450.2 L1470.5,443.9 L1470.5,437.6 L1470.5,431.2 L1470.5,424.8 L1470.6,418.2 L1470.7,411.6 L1470.9,404.9 L1471.1,398.1 L1471.4,391.2 L1471.7,384.2 L1472.0,377.1 L1472.4,370.0 L1472.9,362.7 L1473.4,355.3 L1474.0,347.8 L1474.7,340.2 L1475.4,332.5 L1476.2,324.7 L1477.0,316.7 L1477.9,308.6 L1478.9,300.4 L1480.0,292.1 L1481.2,283.6 L1482.5,275.0 L1483.9,266.3 L1485.3,257.4 L1486.9,248.3 L1488.6,239.1 L1490.5,229.7 L1492.4,220.2 L1510.5,148.3 L1569.9,-0.3 L1709.4,-180.7 L2007.2,-296.9 Z" fill="#ff7f50" fill-opacity="0.3"/>
<path d="M607.6,-251.5 L694.5,-238.7 L770.5,-204.3 L830.0,-156.7 L873.1,-103.6 L902.4,-50.2 L920.9,0.9 L931.4,48.8 L935.6,92.9 L935.2,133.5 L931.2,170.6 L924.4,204.6 L920.1,220.5 L919.3,223.1 L918.5,225.7 L917.7,228.2 L916.9,230.7 L916.1,233.2 L915.3,235.7 L914.4,238.2 L913.6,240.6 L912.7,243.1 L911.8,245.5 L910.9,247.9 L910.0,250.2 L909.1,252.6 L908.2,254.9 L907.2,257.3 L906.3,259.6 L905.3,261.9 L904.4,264.1 L903.4,266.4 L902.4,268.6 L901.4,270.9 L900.4,273.1 L899.4,275.3 L898.3,277.4 L897.3,279.6 L896.2,281.7 L895.2,283.9 L894.1,286.0 L893.0,288.1 L892.0,290.1 L890.9,292.2 L889.8,294.2 L888.7,296.3 L887.5,298.3 L886.4,300.3 L885.3,302.3 L884.2,304.2 L883.0,306.2 L881.9,308.1 L880.7,310.1 L879.5,312.0 L878.3,313.9 L877.2,315.7 L876.0,317.6 L874.8,319.5 L873.6,321.3 L872.4,323.1 L871.1,324.9 L869.9,326.7 L868.7,328.5 L867.4,330.3 L866.2,332.0 L865.0,333.8 L863.7,335.5 L862.4,337.2 L861.2,338.9 L859.9,340.6 L858.6,342.3 L857.3,343.9 L856.0,345.6 L854.8,347.2 L853.5,348.8 L852.1,350.5 L850.8,352.1 L849.5,353.6 L848.2,355.2 L846.9,356.8 L845.5,358.3 L844.2,359.8 L842.9,361.4 L841.5,362.9 L840.2,364.4 L838.8,365.8 L837.4,367.3 L836.1,368.8 L834.7,370.2 L833.3,371.6 L832.0,373.1 L830.6,374.5 L829.2,375.9 L827.8,377.3 L826.4,378.6 L825.0,380.0 L823.6,381.3 L822.2,382.7 L820.8,384.0 L819.4,385.3 L818.0,386.6 L816.5,387.9 L815.1,389.2 L813.7,390.5 L812.2,391.7 L810.8,393.0 L809.4,394.2 L807.9,395.4 L806.5,396.7 L805.0,397.9 L803.6,399.0 L802.1,400.2 L800.6,401.4 L799.2,402.6 L797.7,403.7 L796.2,404.8 L794.8,406.0 L793.3,407.1 L791.8,408.2 L790.3,409.3 L779.9,416.6 L761.6,428.1 L743.1,438.0 L724.2,446.6 L705.1,453.8 L685.9,459.6 L666.4,464.2 L646.9,467.4 L627.3,469.3 L607.6,469.9 L588.0,469.3 L568.4,467.4 L548.9,464.2 L529.4,459.6 L510.2,453.8 L491.1,446.6 L472.2,438.0 L453.7,428.1 L435.4,416.6 L417.6,403.7 L400.2,389.2 L383.3,373.1 L367.1,355.2 L351.6,335.5 L337.0,313.9 L323.3,290.1 L310.9,264.1 L300.0,235.7 L290.9,204.6 L284.1,170.6 L280.0,133.5 L279.6,92.9 L283.9,48.8 L294.3,0.9 L312.9,-50.2 L342.2,-103.6 L385.3,-156.7 L444.8,-204.3 L520.8,-238.7 L607.6,-251.5 Z" fill="#ff7f50" fill-opacity="0.3"/>
<path d="M1171.3,-63.2 L1296.2,-40.2 L1397.1,17.6 L1467.7,89.9 L1513.4,163.3 L1537.8,221.2 L1539.7,226.7 L1541.5,232.3 L1543.2,237.7 L1544.9,243.2 L1546.4,248.6 L1547.9,253.9 L1549.3,259.2 L1550.7,264.5 L1552.0,269.7 L1553.2,274.9 L1554.3,280.1 L1555.4,285.2 L1556.4,290.2 L1557.4,295.2 L1558.3,300.2 L1559.1,305.1 L1559.9,310.0 L1560.6,314.8 L1561.3,319.7 L1562.0,324.4 L1562.5,329.1 L1563.1,333.8 L1563.6,338.5 L1564.0,343.1 L1564.4,347.6 L1564.8,352.2 L1565.1,356.7 L1565.4,361.1 L1565.6,365.5 L1565.8,369.9 L1566.0,374.3 L1566.1,378.6 L1566.2,382.8 L1566.3,387.1 L1566.3,391.3 L1566.3,395.4 L1566.3,399.6 L1566.2,403.7 L1566.1,407.7 L1566.0,411.8 L1565.8,415.8 L1565.6,419.7 L1565.4,423.7 L1565.2,427.6 L1564.9,431.5 L1564.6,435.3 L1564.3,439.1 L1563.9,442.9 L1563.6,446.6 L1563.2,450.4 L1562.8,454.1 L1562.3,457.7 L1561.9,461.4 L1561.4,465.0 L1560.9,468.6 L1560.3,472.1 L1559.8,475.6 L1559.2,479.1 L1558.6,482.6 L1558.0,486.0 L1557.4,489.5 L1556.8,492.8 L1556.1,496.2 L1555.4,499.6 L1554.7,502.9 L1554.0,506.2 L1553.3,509.4 L1552.5,512.7 L1551.8,515.9 L1551.0,519.1 L1550.2,522.3 L1549.4,525.4 L1548.6,528.5 L1547.7,531.6 L1546.9,534.7 L1546.0,537.8 L1545.1,540.8 L1544.2,543.8 L1543.3,546.8 L1542.4,549.8 L1541.5,552.7 L1540.5,555.7 L1539.6,558.6 L1538.6,561.4 L1537.6,564.3 L1536.6,567.1 L1535.6,570.0 L1534.6,572.8 L1533.5,575.6 L1532.5,578.3 L1531.4,581.1 L1530.3,583.8 L1529.3,586.5 L1528.2,589.2 L1527.1,591.9 L1525.9,594.5 L1524.8,597.1 L1523.7,599.8 L1522.5,602.3 L1521.4,604.9 L1520.2,607.5 L1519.0,610.0 L1517.9,612.5 L1516.7,615.1 L1515.5,617.5 L1514.2,620.0 L1513.0,622.5 L1511.8,624.9 L1510.6,627.3 L1509.3,629.7 L1508.0,632.1 L1506.8,634.5 L1505.5,636.8 L1504.2,639.2 L1502.9,641.5 L1501.6,643.8 L1500.3,646.1 L1499.0,648.4 L1497.7,650.6 L1496.3,652.9 L1495.0,655.1 L1493.6,657.3 L1492.3,659.5 L1490.9,661.7 L1489.5,663.9 L1488.2,666.0 L1486.8,668.1 L1485.4,670.3 L1484.0,672.4 L1482.6,674.5 L1481.2,676.5 L1479.7,678.6 L1478.3,680.6 L1476.9,682.7 L1475.4,684.7 L1474.0,686.7 L1472.5,688.7 L1471.0,690.7 L1469.6,692.6 L1468.1,694.6 L1466.6,696.5 L1465.1,698.4 L1463.6,700.3 L1462.1,702.2 L1460.6,704.1 L1459.1,706.0 L1457.6,707.8 L1456.0,709.7 L1454.5,711.5 L1452.9,713.3 L1451.4,715.1 L1449.8,716.9 L1448.3,718.7 L1446.7,720.4 L1445.1,722.2 L1443.6,723.9 L1442.0,725.6 L1440.4,727.3 L1438.8,729.0 L1437.2,730.7 L1435.6,732.4 L1434.0,734.0 L1432.4,735.7 L1430.7,737.3 L1429.1,738.9 L1427.5,740.5 L1425.8,742.1 L1424.2,743.7 L1422.5,745.3 L1420.9,746.8 L1419.2,748.3 L1417.6,749.9 L1415.9,751.4 L1414.2,752.9 L1412.5,754.4 L1410.9,755.9 L1409.2,757.3 L1407.5,758.8 L1405.8,760.2 L1404.1,761.7 L1402.4,763.1 L1400.6,764.5 L1398.9,765.9 L1397.2,767.3 L1395.5,768.6 L1393.7,770.0 L1392.0,771.3 L1390.3,772.7 L1388.5,774.0 L1386.8,775.3 L1385.0,776.6 L1383.2,777.9 L1381.5,779.2 L1379.7,780.4 L1377.9,781.7 L1376.2,782.9 L1374.4,784.1 L1372.6,785.4 L1370.8,786.6 L1369.0,787.8 L1367.2,788.9 L1365.4,790.1 L1363.6,791.3 L1361.8,792.4 L1360.0,793.5 L1358.2,794.7 L1356.3,795.8 L1354.5,796.9 L1352.7,797.9 L1350.9,799.0 L1349.0,800.1 L1347.2,801.1 L1345.3,802.2 L1343.5,803.2 L1341.6,804.2 L1339.8,805.2 L1337.9,806.2 L1336.1,807.2 L1334.2,808.2 L1332.3,809.1 L1330.5,810.1 L1328.6,811.0 L1326.7,811.9 L1324.8,812.8 L1322.9,813.7 L1321.0,814.6 L1319.2,815.5 L1317.3,816.4 L1315.4,817.2 L1313.5,818.1 L1311.6,818.9 L1309.7,819.7 L1307.7,820.5 L1305.8,821.3 L1303.9,822.1 L1302.0,822.9 L1300.1,823.6 L1298.2,824.4 L1296.2,825.1 L1294.3,825.8 L1292.4,826.5 L1290.4,827.2 L1288.5,827.9 L1286.6,828.6 L1284.6,829.3 L1282.7,829.9 L1280.7,830.6 L1278.8,831.2 L1276.8,831.8 L1274.9,832.4 L1272.9,833.0 L1271.0,833.6 L1269.0,834.2 L1267.1,834.8 L1265.1,835.3 L1263.1,835.9 L1261.2,836.4 L1259.2,836.9 L1257.2,837.4 L1255.3,837.9 L1253.3,838.4 L1251.3,838.9 L1249.3,839.3 L1247.3,839.8 L1245.4,840.2 L1243.4,840.6 L1241.4,841.0 L1239.4,841.4 L1237.4,841.8 L1235.4,842.2 L1233.4,842.6 L1231.5,842.9 L1229.5,843.3 L1227.5,843.6 L1225.5,843.9 L1223.5,844.2 L1221.5,844.5 L1219.5,844.8 L1217.5,845.1 L1215.5,845.3 L1213.5,845.6 L1211.5,845.8 L1209.5,846.1 L1207.5,846.3 L1205.5,846.5 L1203.5,846.7 L1201.5,846.8 L1199.4,847.0 L1197.4,847.2 L1195.4,847.3 L1193.4,847.4 L1191.4,847.6 L1189.4,847.7 L1187.4,847.8 L1185.4,847.9 L1183.4,847.9 L1181.4,848.0 L1179.4,848.1 L1177.3,848.1 L1175.3,848.1 L1173.3,848.1 L1171.3,848.2 L1169.3,848.1 L1167.3,848.1 L1165.3,848.1 L1163.3,848.1 L1161.2,848.0 L1159.2,847.9 L1157.2,847.9 L1155.2,847.8 L1153.2,847.7 L1151.2,847.6 L1149.2,847.4 L1147.2,847.3 L1145.2,847.2 L1143.2,847.0 L1141.2,846.8 L1139.2,846.7 L1137.1,846.5 L1135.1,846.3 L1133.1,846.1 L1131.1,845.8 L1129.1,845.6 L1127.1,845.3 L1125.1,845.1 L1123.1,844.8 L1121.1,844.5 L1119.1,844.2 L1117.1,843.9 L1115.1,843.6 L1113.1,843.3 L1111.2,842.9 L1109.2,842.6 L1107.2,842.2 L1105.2,841.8 L1103.2,841.4 L1101.2,841.0 L1099.2,840.6 L1097.2,840.2 L1095.3,839.8 L1093.3,839.3 L1091.3,838.9 L1089.3,838.4 L1087.4,837.9 L1085.4,837.4 L1083.4,836.9 L1081.4,836.4 L1079.5,835.9 L1077.5,835.3 L1075.6,834.8 L1073.6,834.2 L1071.6,833.6 L1069.7,833.0 L1067.7,832.4 L1065.8,831.8 L1063.8,831.2 L1061.9,830.6 L1059.9,829.9 L1058.0,829.3 L1056.0,828.6 L1054.1,827.9 L1052.2,827.2 L1050.2,826.5 L1048.3,825.8 L1046.4,825.1 L1044.4,824.4 L1042.5,823.6 L1040.6,822.9 L1038.7,822.1 L1036.8,821.3 L1034.9,820.5 L1033.0,819.7 L1031.0,818.9 L1029.1,818.1 L1027.2,817.2 L1025.3,816.4 L1023.5,815.5 L1021.6,814.6 L1019.7,813.7 L1017.8,812.8 L1015.9,811.9 L1014.0,811.0 L1012.2,810.1 L1010.3,809.1 L1008.4,808.2 L1006.6,807.2 L1004.7,806.2 L1002.8,805.2 L1001.0,804.2 L999.1,803.2 L997.3,802.2 L995.4,801.1 L993.6,800.1 L991.8,799.0 L989.9,797.9 L988.1,796.9 L986.3,795.8 L984.5,794.7 L982.6,793.5 L980.8,792.4 L979.0,791.3 L977.2,790.1 L975.4,788.9 L973.6,787.8 L971.8,786.6 L970.0,785.4 L968.2,784.1 L966.5,782.9 L964.7,781.7 L962.9,780.4 L961.1,779.2 L959.4,777.9 L957.6,776.6 L955.9,775.3 L954.1,774.0 L952.4,772.7 L950.6,771.3 L948.9,770.0 L947.1,768.6 L945.4,767.3 L943.7,765.9 L942.0,764.5 L940.3,763.1 L938.6,761.7 L936.8,760.2 L935.1,758.8 L933.5,757.3 L931.8,755.9 L930.1,754.4 L928.4,752.9 L926.7,751.4 L925.1,749.9 L923.4,748.3 L921.7,746.8 L920.1,745.3 L918.4,743.7 L916.8,742.1 L915.1,740.5 L913.5,738.9 L911.9,737.3 L910.3,735.7 L908.6,734.0 L907.0,732.4 L905.4,730.7 L903.8,729.0 L902.2,727.3 L900.6,725.6 L899.0,723.9 L897.5,722.2 L895.9,720.4 L894.3,718.7 L892.8,716.9 L891.2,715.1 L889.7,713.3 L888.1,711.5 L886.6,709.7 L885.1,707.8 L883.5,706.0 L882.0,704.1 L880.5,702.2 L879.0,700.3 L877.5,698.4 L876.0,696.5 L874.5,694.6 L873.0,692.6 L871.6,690.7 L870.1,688.7 L868.6,686.7 L867.2,684.7 L865.8,682.7 L864.3,680.6 L862.9,678.6 L861.5,676.5 L860.0,674.5 L858.6,672.4 L857.2,670.3 L855.8,668.1 L854.4,666.0 L853.1,663.9 L851.7,661.7 L850.3,659.5 L849.0,657.3 L847.6,655.1 L846.3,652.9 L844.9,650.6 L843.6,648.4 L842.3,646.1 L841.0,643.8 L839.7,641.5 L838.4,639.2 L837.1,636.8 L835.8,634.5 L834.6,632.1 L833.3,629.7 L832.1,627.3 L830.8,624.9 L829.6,622.5 L828.4,620.0 L827.1,617.5 L825.9,615.1 L824.8,612.5 L823.6,610.0 L822.4,607.5 L821.2,604.9 L820.1,602.3 L818.9,599.8 L817.8,597.1 L816.7,594.5 L815.6,591.9 L814.4,589.2 L813.4,586.5 L812.3,583.8 L811.2,581.1 L810.1,578.3 L809.1,575.6 L808.1,572.8 L807.0,570.0 L806.0,567.1 L805.0,564.3 L804.0,561.4 L803.1,558.6 L802.1,555.7 L801.1,552.7 L800.2,549.8 L799.3,546.8 L798.4,543.8 L797.5,540.8 L796.6,537.8 L795.7,534.7 L794.9,531.6 L794.0,528.5 L793.2,525.4 L792.4,522.3 L791.6,519.1 L790.8,515.9 L790.1,512.7 L785.8,492.8 L779.4,450.4 L776.4,403.7 L777.8,352.2 L785.2,295.2 L790.7,269.7 L791.9,264.5 L793.3,259.2 L794.7,253.9 L796.2,248.6 L797.8,243.2 L799.4,237.7 L801.1,232.3 L802.9,226.7 L804.8,221.2 L829.2,163.3 L874.9,89.9 L945.5,17.6 L1046.4,-40.2 L1171.3,-63.2 Z" fill="none" stroke="#ff7f50" stroke-width="2.8"/>
<path d="M1075.3,743.0 L1078.7,743.0 L1082.1,743.0 L1085.5,743.1 L1088.9,743.3 L1092.3,743.4 L1095.7,743.6 L1099.1,743.9 L1102.5,744.2 L1105.9,744.5 L1109.3,744.8 L1112.6,745.2 L1116.0,745.7 L1119.4,746.1 L1122.7,746.6 L1126.1,747.2 L1129.4,747.8 L1132.7,748.4 L1136.0,749.0 L1139.3,749.7 L1142.6,750.4 L1145.9,751.2 L1149.2,752.0 L1152.4,752.8 L1155.7,753.7 L1158.9,754.6 L1162.1,755.5 L1165.3,756.4 L1168.5,757.4 L1171.7,758.5 L1174.8,759.5 L1178.0,760.6 L1181.1,761.7 L1184.2,762.9 L1187.3,764.1 L1190.4,765.3 L1193.5,766.5 L1196.5,767.8 L1199.5,769.1 L1202.5,770.4 L1205.5,771.8 L1208.5,773.2 L1211.4,774.6 L1214.3,776.1 L1217.2,777.5 L1220.1,779.0 L1223.0,780.6 L1225.8,782.1 L1228.6,783.7 L1231.4,785.3 L1234.2,786.9 L1237.0,788.5 L1239.7,790.2 L1242.4,791.9 L1245.1,793.6 L1247.8,795.4 L1250.4,797.1 L1253.1,798.9 L1255.7,800.7 L1258.2,802.6 L1260.8,804.4 L1263.3,806.3 L1265.8,808.2 L1268.3,810.1 L1270.8,812.0 L1273.2,813.9 L1275.6,815.9 L1278.0,817.9 L1280.4,819.9 L1282.7,821.9 L1285.1,823.9 L1287.4,826.0 L1289.6,828.0 L1291.9,830.1 L1294.1,832.2 L1296.3,834.3 L1298.5,836.4 L1300.6,838.6 L1302.8,840.7 L1304.9,842.9 L1307.0,845.1 L1309.0,847.2 L1311.1,849.5 L1313.1,851.7 L1315.1,853.9 L1317.0,856.1 L1319.0,858.4 L1320.9,860.7 L1322.8,862.9 L1324.7,865.2 L1326.5,867.5 L1328.4,869.8 L1330.2,872.1 L1332.0,874.5 L1333.7,876.8 L1335.5,879.1 L1337.2,881.5 L1338.9,883.8 L1340.6,886.2 L1342.2,888.6 L1343.8,891.0 L1345.4,893.4 L1347.0,895.8 L1348.6,898.2 L1350.1,900.6 L1351.6,903.0 L1353.1,905.5 L1354.6,907.9 L1356.1,910.3 L1357.5,912.8 L1358.9,915.2 L1360.3,917.7 L1361.7,920.2 L1363.0,922.7 L1364.4,925.1 L1365.7,927.6 L1367.0,930.1 L1368.2,932.6 L1369.5,935.1 L1370.7,937.6 L1371.9,940.1 L1373.1,942.6 L1374.3,945.2 L1375.4,947.7 L1376.5,950.2 L1377.6,952.8 L1378.7,955.3 L1379.8,957.8 L1380.8,960.4 L1381.9,962.9 L1382.9,965.5 L1383.9,968.0 L1384.8,970.6 L1385.8,973.2 L1386.7,975.7 L1387.6,978.3 L1388.5,980.9 L1389.4,983.5 L1390.2,986.0 L1391.1,988.6 L1391.9,991.2 L1392.7,993.8 L1393.5,996.4 L1394.3,999.0 L1395.0,1001.6 L1395.7,1004.2 L1396.4,1006.8 L1397.1,1009.4 L1397.8,1012.0 L1398.5,1014.6 L1399.1,1017.2 L1399.7,1019.8 L1400.3,1022.4 L1400.9,1025.1 L1401.5,1027.7 L1402.0,1030.3 L1402.5,1032.9 L1403.0,1035.6 L1403.5,1038.2 L1404.0,1040.8 L1404.5,1043.4 L1404.9,1046.1 L1405.3,1048.7 L1405.8,1051.4 L1406.1,1054.0 L1406.5,1056.6 L1406.9,1059.3 L1407.2,1061.9 L1407.5,1064.6 L1407.8,1067.2 L1408.1,1069.9 L1408.4,1072.5 L1408.6,1075.2 L1408.9,1077.8 L1409.1,1080.5 L1409.3,1083.1 L1409.5,1085.8 L1409.6,1088.5 L1409.8,1091.1 L1409.9,1093.8 L1410.0,1096.5 L1410.1,1099.1 L1410.2,1101.8 L1410.3,1104.5 L1410.3,1107.1 L1410.3,1109.8 L1410.3,1112.5 L1410.3,1115.1 L1410.3,1117.8 L1410.3,1120.5 L1410.2,1123.2 L1410.1,1125.9 L1410.0,1128.5 L1407.5,1160.8 L1402.4,1193.1 L1394.5,1225.5 L1383.6,1257.8 L1369.6,1289.9 L1352.1,1321.4 L1330.9,1352.1 L1305.8,1381.4 L1276.4,1408.6 L1242.9,1433.0 L1205.3,1453.5 L1164.2,1469.1 L1120.5,1478.9 L1075.3,1482.2 L1030.2,1478.9 L986.5,1469.1 L945.4,1453.5 L907.8,1433.0 L874.3,1408.6 L844.9,1381.4 L819.8,1352.1 L798.6,1321.4 L781.1,1289.9 L767.1,1257.8 L756.2,1225.5 L748.3,1193.1 L743.2,1160.8 L740.6,1128.5 L740.7,1096.5 L743.2,1064.6 L748.1,1032.9 L755.7,1001.6 L765.9,970.6 L778.8,940.1 L790.4,917.7 L791.8,915.2 L793.2,912.8 L794.6,910.3 L796.1,907.9 L797.5,905.5 L799.0,903.0 L800.6,900.6 L802.1,898.2 L803.7,895.8 L805.2,893.4 L806.9,891.0 L808.5,888.6 L810.1,886.2 L811.8,883.8 L813.5,881.5 L815.2,879.1 L817.0,876.8 L818.7,874.5 L820.5,872.1 L822.3,869.8 L824.1,867.5 L826.0,865.2 L827.9,862.9 L829.8,860.7 L831.7,858.4 L833.6,856.1 L835.6,853.9 L837.6,851.7 L839.6,849.5 L841.7,847.2 L843.7,845.1 L845.8,842.9 L847.9,840.7 L850.0,838.6 L852.2,836.4 L854.4,834.3 L856.6,832.2 L858.8,830.1 L861.1,828.0 L863.3,826.0 L865.6,823.9 L868.0,821.9 L870.3,819.9 L872.7,817.9 L875.1,815.9 L877.5,813.9 L879.9,812.0 L882.4,810.1 L884.9,808.2 L887.4,806.3 L889.9,804.4 L892.4,802.6 L895.0,800.7 L897.6,798.9 L900.2,797.1 L902.9,795.4 L905.6,793.6 L908.3,791.9 L911.0,790.2 L913.7,788.5 L916.5,786.9 L919.2,785.3 L922.0,783.7 L924.9,782.1 L927.7,780.6 L930.6,779.0 L933.4,777.5 L936.4,776.1 L939.3,774.6 L942.2,773.2 L945.2,771.8 L948.2,770.4 L951.2,769.1 L954.2,767.8 L957.2,766.5 L960.3,765.3 L963.4,764.1 L966.5,762.9 L969.6,761.7 L972.7,760.6 L975.8,759.5 L979.0,758.5 L982.2,757.4 L985.4,756.4 L988.6,755.5 L991.8,754.6 L995.0,753.7 L998.3,752.8 L1001.5,752.0 L1004.8,751.2 L1008.1,750.4 L1011.4,749.7 L1014.7,749.0 L1018.0,748.4 L1021.3,747.8 L1024.6,747.2 L1028.0,746.6 L1031.3,746.1 L1034.7,745.7 L1038.0,745.2 L1041.4,744.8 L1044.8,744.5 L1048.2,744.2 L1051.6,743.9 L1054.9,743.6 L1058.3,743.4 L1061.7,743.3 L1065.1,743.1 L1068.5,743.0 L1071.9,743.0 L1075.3,743.0 Z" fill="none" stroke="#ff7f50" stroke-width="2.8"/>
<path d="M1339.8,558.8 L1342.6,558.8 L1345.3,558.9 L1348.1,559.0 L1350.9,559.1 L1353.7,559.3 L1356.5,559.5 L1359.2,559.7 L1362.0,560.0 L1364.8,560.3 L1367.5,560.6 L1370.3,561.0 L1373.0,561.4 L1375.8,561.8 L1378.5,562.3 L1381.2,562.8 L1383.9,563.4 L1386.6,564.0 L1389.3,564.6 L1392.0,565.2 L1394.6,565.9 L1397.3,566.6 L1399.9,567.4 L1402.6,568.1 L1405.2,569.0 L1407.8,569.8 L1410.4,570.7 L1413.0,571.6 L1415.5,572.5 L1418.0,573.5 L1420.6,574.5 L1423.1,575.5 L1425.6,576.5 L1428.0,577.6 L1430.5,578.7 L1432.9,579.9 L1435.3,581.0 L1437.7,582.2 L1440.1,583.4 L1442.5,584.7 L1444.8,586.0 L1447.1,587.2 L1449.4,588.6 L1451.7,589.9 L1454.0,591.3 L1456.2,592.7 L1458.4,594.1 L1460.6,595.5 L1462.8,597.0 L1464.9,598.4 L1467.0,599.9 L1469.1,601.5 L1471.2,603.0 L1473.2,604.6 L1475.3,606.1 L1477.3,607.7 L1479.3,609.3 L1481.2,611.0 L1483.2,612.6 L1485.1,614.3 L1487.0,616.0 L1488.8,617.7 L1490.7,619.4 L1492.5,621.1 L1494.3,622.9 L1496.0,624.6 L1497.8,626.4 L1499.5,628.2 L1501.2,630.0 L1502.8,631.8 L1504.5,633.6 L1506.1,635.5 L1507.7,637.3 L1509.3,639.2 L1510.8,641.0 L1512.3,642.9 L1513.8,644.8 L1515.3,646.7 L1516.8,648.6 L1518.2,650.5 L1519.6,652.5 L1521.0,654.4 L1522.3,656.3 L1523.7,658.3 L1525.0,660.2 L1526.2,662.2 L1527.5,664.2 L1528.7,666.2 L1530.0,668.1 L1531.1,670.1 L1532.3,672.1 L1533.5,674.1 L1534.6,676.1 L1535.7,678.1 L1536.7,680.2 L1537.8,682.2 L1538.8,684.2 L1539.8,686.2 L1540.8,688.2 L1541.8,690.3 L1542.7,692.3 L1543.6,694.3 L1544.5,696.4 L1545.4,698.4 L1546.3,700.5 L1547.1,702.5 L1547.9,704.6 L1548.7,706.6 L1549.5,708.6 L1550.2,710.7 L1551.0,712.7 L1551.7,714.8 L1552.3,716.8 L1553.0,718.9 L1553.7,720.9 L1554.3,723.0 L1554.9,725.0 L1555.5,727.1 L1556.0,729.1 L1556.6,731.2 L1557.1,733.2 L1557.6,735.3 L1558.1,737.3 L1558.6,739.3 L1559.0,741.4 L1559.5,743.4 L1559.9,745.5 L1560.3,747.5 L1560.7,749.5 L1561.0,751.5 L1561.4,753.6 L1561.7,755.6 L1562.0,757.6 L1562.3,759.6 L1562.6,761.6 L1562.8,763.7 L1563.1,765.7 L1563.3,767.7 L1563.5,769.7 L1563.7,771.7 L1563.8,773.7 L1564.0,775.7 L1564.1,777.6 L1564.2,779.6 L1564.3,781.6 L1564.4,783.6 L1564.5,785.5 L1564.5,787.5 L1564.6,789.5 L1564.6,791.4 L1564.6,793.4 L1564.6,795.3 L1564.6,797.3 L1564.5,799.2 L1564.5,801.2 L1564.4,803.1 L1564.3,805.0 L1564.2,806.9 L1564.1,808.8 L1564.0,810.7 L1563.9,812.7 L1563.7,814.5 L1563.5,816.4 L1563.3,818.3 L1563.1,820.2 L1562.9,822.1 L1562.7,824.0 L1562.4,825.8 L1562.2,827.7 L1561.9,829.5 L1561.6,831.4 L1561.3,833.2 L1561.0,835.1 L1560.7,836.9 L1560.4,838.7 L1560.0,840.5 L1559.6,842.4 L1559.3,844.2 L1558.9,846.0 L1558.5,847.8 L1558.1,849.5 L1557.6,851.3 L1557.2,853.1 L1556.7,854.9 L1556.3,856.6 L1555.8,858.4 L1555.3,860.1 L1554.8,861.9 L1554.3,863.6 L1553.8,865.3 L1553.2,867.1 L1552.7,868.8 L1552.1,870.5 L1551.5,872.2 L1550.9,873.9 L1550.3,875.6 L1549.7,877.2 L1549.1,878.9 L1548.5,880.6 L1547.8,882.2 L1547.2,883.9 L1546.5,885.5 L1545.8,887.2 L1545.1,888.8 L1544.4,890.4 L1543.7,892.0 L1543.0,893.6 L1542.3,895.2 L1541.5,896.8 L1540.8,898.4 L1540.0,900.0 L1539.2,901.6 L1538.4,903.1 L1537.6,904.7 L1536.8,906.2 L1536.0,907.8 L1535.2,909.3 L1534.4,910.8 L1533.5,912.3 L1532.7,913.8 L1531.8,915.3 L1530.9,916.8 L1530.0,918.3 L1529.1,919.8 L1528.2,921.3 L1527.3,922.7 L1526.4,924.2 L1525.4,925.6 L1524.5,927.0 L1523.5,928.5 L1522.6,929.9 L1521.6,931.3 L1520.6,932.7 L1519.6,934.1 L1518.6,935.5 L1517.6,936.8 L1516.6,938.2 L1515.5,939.6 L1514.5,940.9 L1513.5,942.3 L1512.4,943.6 L1511.3,944.9 L1510.3,946.2 L1509.2,947.5 L1508.1,948.8 L1507.0,950.1 L1505.9,951.4 L1504.8,952.6 L1503.6,953.9 L1502.5,955.2 L1501.3,956.4 L1500.2,957.6 L1499.0,958.8 L1497.9,960.1 L1496.7,961.3 L1495.5,962.5 L1494.3,963.6 L1493.1,964.8 L1491.9,966.0 L1490.7,967.1 L1489.5,968.3 L1488.2,969.4 L1487.0,970.5 L1485.8,971.7 L1484.5,972.8 L1483.2,973.9 L1482.0,974.9 L1480.7,976.0 L1479.4,977.1 L1478.1,978.2 L1476.8,979.2 L1475.5,980.2 L1474.2,981.3 L1472.9,982.3 L1471.6,983.3 L1470.2,984.3 L1468.9,985.3 L1467.6,986.2 L1466.2,987.2 L1464.9,988.2 L1463.5,989.1 L1462.1,990.0 L1460.7,991.0 L1459.4,991.9 L1458.0,992.8 L1456.6,993.7 L1455.2,994.6 L1453.8,995.4 L1452.3,996.3 L1450.9,997.1 L1449.5,998.0 L1448.1,998.8 L1446.6,999.6 L1445.2,1000.4 L1443.7,1001.2 L1442.3,1002.0 L1440.8,1002.8 L1439.4,1003.5 L1437.9,1004.3 L1436.4,1005.0 L1434.9,1005.7 L1433.5,1006.5 L1432.0,1007.2 L1430.5,1007.9 L1429.0,1008.5 L1427.5,1009.2 L1426.0,1009.9 L1424.4,1010.5 L1422.9,1011.1 L1421.4,1011.8 L1419.9,1012.4 L1418.3,1013.0 L1416.8,1013.6 L1415.3,1014.2 L1413.7,1014.7 L1412.2,1015.3 L1410.6,1015.8 L1409.1,1016.4 L1407.5,1016.9 L1405.9,1017.4 L1404.4,1017.9 L1402.8,1018.4 L1401.2,1018.8 L1399.7,1019.3 L1398.1,1019.7 L1396.5,1020.2 L1394.9,1020.6 L1393.3,1021.0 L1391.7,1021.4 L1390.1,1021.8 L1388.5,1022.2 L1386.9,1022.5 L1385.3,1022.9 L1383.7,1023.2 L1382.1,1023.6 L1380.5,1023.9 L1378.9,1024.2 L1377.3,1024.5 L1375.7,1024.7 L1374.0,1025.0 L1372.4,1025.3 L1370.8,1025.5 L1369.2,1025.7 L1367.6,1026.0 L1365.9,1026.2 L1364.3,1026.4 L1362.7,1026.5 L1361.0,1026.7 L1359.4,1026.9 L1357.8,1027.0 L1356.1,1027.1 L1354.5,1027.2 L1352.9,1027.4 L1351.2,1027.4 L1349.6,1027.5 L1348.0,1027.6 L1346.3,1027.6 L1344.7,1027.7 L1343.1,1027.7 L1341.4,1027.7 L1339.8,1027.7 L1338.1,1027.7 L1336.5,1027.7 L1334.9,1027.7 L1333.2,1027.6 L1331.6,1027.6 L1329.9,1027.5 L1328.3,1027.4 L1326.7,1027.4 L1325.0,1027.2 L1323.4,1027.1 L1321.8,1027.0 L1320.1,1026.9 L1318.5,1026.7 L1316.9,1026.5 L1315.2,1026.4 L1313.6,1026.2 L1312.0,1026.0 L1310.4,1025.7 L1308.7,1025.5 L1307.1,1025.3 L1305.5,1025.0 L1303.9,1024.7 L1302.3,1024.5 L1300.6,1024.2 L1299.0,1023.9 L1297.4,1023.6 L1295.8,1023.2 L1294.2,1022.9 L1292.6,1022.5 L1291.0,1022.2 L1289.4,1021.8 L1287.8,1021.4 L1286.2,1021.0 L1284.6,1020.6 L1283.1,1020.2 L1281.5,1019.7 L1279.9,1019.3 L1278.3,1018.8 L1276.7,1018.4 L1275.2,1017.9 L1273.6,1017.4 L1272.0,1016.9 L1270.5,1016.4 L1268.9,1015.8 L1267.4,1015.3 L1265.8,1014.7 L1264.3,1014.2 L1262.7,1013.6 L1261.2,1013.0 L1259.7,1012.4 L1258.1,1011.8 L1256.6,1011.1 L1255.1,1010.5 L1253.6,1009.9 L1252.1,1009.2 L1250.6,1008.5 L1249.1,1007.9 L1247.6,1007.2 L1246.1,1006.5 L1244.6,1005.7 L1243.1,1005.0 L1241.7,1004.3 L1240.2,1003.5 L1238.7,1002.8 L1237.3,1002.0 L1235.8,1001.2 L1234.4,1000.4 L1232.9,999.6 L1231.5,998.8 L1230.0,998.0 L1228.6,997.1 L1227.2,996.3 L1225.8,995.4 L1224.4,994.6 L1223.0,993.7 L1221.6,992.8 L1220.2,991.9 L1218.8,991.0 L1217.4,990.0 L1216.1,989.1 L1214.7,988.2 L1213.3,987.2 L1212.0,986.2 L1210.6,985.3 L1209.3,984.3 L1208.0,983.3 L1206.6,982.3 L1205.3,981.3 L1204.0,980.2 L1202.7,979.2 L1201.4,978.2 L1200.1,977.1 L1198.8,976.0 L1197.6,974.9 L1196.3,973.9 L1195.0,972.8 L1193.8,971.7 L1192.5,970.5 L1191.3,969.4 L1190.1,968.3 L1188.8,967.1 L1187.6,966.0 L1186.4,964.8 L1185.2,963.6 L1184.0,962.5 L1182.9,961.3 L1181.7,960.1 L1180.5,958.8 L1179.4,957.6 L1178.2,956.4 L1177.1,955.2 L1175.9,953.9 L1174.8,952.6 L1173.7,951.4 L1172.6,950.1 L1171.5,948.8 L1170.4,947.5 L1169.3,946.2 L1168.2,944.9 L1167.2,943.6 L1166.1,942.3 L1165.0,940.9 L1164.0,939.6 L1163.0,938.2 L1162.0,936.8 L1160.9,935.5 L1159.9,934.1 L1158.9,932.7 L1158.0,931.3 L1157.0,929.9 L1156.0,928.5 L1155.1,927.0 L1154.1,925.6 L1153.2,924.2 L1152.3,922.7 L1151.3,921.3 L1150.4,919.8 L1149.5,918.3 L1148.6,916.8 L1147.8,915.3 L1146.9,913.8 L1146.0,912.3 L1145.2,910.8 L1144.4,909.3 L1143.5,907.8 L1142.7,906.2 L1141.9,904.7 L1141.1,903.1 L1140.3,901.6 L1139.5,900.0 L1138.8,898.4 L1138.0,896.8 L1137.3,895.2 L1136.5,893.6 L1135.8,892.0 L1135.1,890.4 L1134.4,888.8 L1133.7,887.2 L1133.0,885.5 L1132.4,883.9 L1131.7,882.2 L1131.1,880.6 L1130.4,878.9 L1129.8,877.2 L1129.2,875.6 L1128.6,873.9 L1128.0,872.2 L1127.4,870.5 L1126.9,868.8 L1126.3,867.1 L1125.8,865.3 L1125.3,863.6 L1124.8,861.9 L1124.2,860.1 L1123.8,858.4 L1123.3,856.6 L1122.8,854.9 L1122.4,853.1 L1121.9,851.3 L1121.5,849.5 L1121.1,847.8 L1120.7,846.0 L1120.3,844.2 L1119.9,842.4 L1119.5,840.5 L1119.2,838.7 L1118.8,836.9 L1118.5,835.1 L1118.2,833.2 L1117.9,831.4 L1117.6,829.5 L1117.4,827.7 L1117.1,825.8 L1116.9,824.0 L1116.6,822.1 L1116.4,820.2 L1116.2,818.3 L1116.0,816.4 L1115.9,814.5 L1115.7,812.7 L1115.6,810.7 L1115.4,808.8 L1115.3,806.9 L1115.2,805.0 L1115.1,803.1 L1115.1,801.2 L1115.0,799.2 L1115.0,797.3 L1114.9,795.3 L1114.9,793.4 L1114.9,791.4 L1115.0,789.5 L1115.0,787.5 L1115.1,785.5 L1115.1,783.6 L1115.2,781.6 L1115.3,779.6 L1115.4,777.6 L1115.6,775.7 L1115.7,773.7 L1115.9,771.7 L1116.1,769.7 L1116.3,767.7 L1116.5,765.7 L1116.7,763.7 L1117.0,761.6 L1117.3,759.6 L1117.5,757.6 L1117.8,755.6 L1118.2,753.6 L1118.5,751.5 L1118.9,749.5 L1119.3,747.5 L1119.7,745.5 L1120.1,743.4 L1120.5,741.4 L1121.0,739.3 L1121.4,737.3 L1121.9,735.3 L1122.4,733.2 L1123.0,731.2 L1123.5,729.1 L1124.1,727.1 L1124.7,725.0 L1125.3,723.0 L1125.9,720.9 L1126.5,718.9 L1127.2,716.8 L1127.9,714.8 L1128.6,712.7 L1129.3,710.7 L1130.1,708.6 L1130.8,706.6 L1131.6,704.6 L1132.4,702.5 L1133.3,700.5 L1134.1,698.4 L1135.0,696.4 L1135.9,694.3 L1136.8,692.3 L1137.8,690.3 L1138.7,688.2 L1139.7,686.2 L1140.7,684.2 L1141.8,682.2 L1142.8,680.2 L1143.9,678.1 L1145.0,676.1 L1146.1,674.1 L1147.2,672.1 L1148.4,670.1 L1149.6,668.1 L1150.8,666.2 L1152.0,664.2 L1153.3,662.2 L1154.6,660.2 L1155.9,658.3 L1157.2,656.3 L1158.6,654.4 L1160.0,652.5 L1161.4,650.5 L1162.8,648.6 L1164.2,646.7 L1165.7,644.8 L1167.2,642.9 L1168.7,641.0 L1170.3,639.2 L1171.8,637.3 L1173.4,635.5 L1175.1,633.6 L1176.7,631.8 L1178.4,630.0 L1180.1,628.2 L1181.8,626.4 L1183.5,624.6 L1185.3,622.9 L1187.1,621.1 L1188.9,619.4 L1190.7,617.7 L1192.6,616.0 L1194.5,614.3 L1196.4,612.6 L1198.3,611.0 L1200.3,609.3 L1202.3,607.7 L1204.3,606.1 L1206.3,604.6 L1208.4,603.0 L1210.4,601.5 L1212.5,599.9 L1214.6,598.4 L1216.8,597.0 L1219.0,595.5 L1221.1,594.1 L1223.4,592.7 L1225.6,591.3 L1227.8,589.9 L1230.1,588.6 L1232.4,587.2 L1234.7,586.0 L1237.1,584.7 L1239.4,583.4 L1241.8,582.2 L1244.2,581.0 L1246.6,579.9 L1249.1,578.7 L1251.5,577.6 L1254.0,576.5 L1256.5,575.5 L1259.0,574.5 L1261.5,573.5 L1264.0,572.5 L1266.6,571.6 L1269.2,570.7 L1271.8,569.8 L1274.4,569.0 L1277.0,568.1 L1279.6,567.4 L1282.2,566.6 L1284.9,565.9 L1287.6,565.2 L1290.2,564.6 L1292.9,564.0 L1295.6,563.4 L1298.3,562.8 L1301.1,562.3 L1303.8,561.8 L1306.5,561.4 L1309.3,561.0 L1312.0,560.6 L1314.8,560.3 L1317.5,560.0 L1320.3,559.7 L1323.1,559.5 L1325.9,559.3 L1328.6,559.1 L1331.4,559.0 L1334.2,558.9 L1337.0,558.8 L1339.8,558.8 Z" fill="none" stroke="#ff7f50" stroke-width="2.8"/>
<path d="M1554.0,390.6 L1558.7,390.7 L1563.5,390.8 L1568.2,391.0 L1573.0,391.3 L1577.7,391.7 L1582.5,392.1 L1587.2,392.6 L1591.9,393.2 L1596.6,393.9 L1601.3,394.6 L1605.9,395.5 L1610.5,396.4 L1615.1,397.4 L1619.7,398.4 L1624.3,399.6 L1628.8,400.8 L1633.3,402.0 L1637.7,403.4 L1642.2,404.8 L1646.6,406.3 L1650.9,407.8 L1655.2,409.4 L1659.5,411.1 L1663.7,412.8 L1667.9,414.6 L1672.0,416.4 L1676.1,418.4 L1710.9,437.9 L1750.8,469.0 L1783.2,503.8 L1808.6,540.3 L1827.6,577.3 L1841.3,613.9 L1850.3,649.6 L1855.4,684.0 L1857.1,717.0 L1855.9,748.5 L1852.0,778.5 L1846.0,807.1 L1837.8,834.1 L1827.8,859.7 L1816.1,883.8 L1802.7,906.5 L1787.9,927.7 L1771.6,947.3 L1754.1,965.4 L1735.3,981.8 L1715.4,996.6 L1694.4,1009.6 L1679.9,1017.2 L1678.0,1018.1 L1676.2,1019.0 L1674.3,1019.9 L1672.5,1020.8 L1670.6,1021.6 L1668.8,1022.4 L1666.9,1023.3 L1665.0,1024.1 L1663.1,1024.9 L1661.2,1025.6 L1659.3,1026.4 L1657.4,1027.1 L1655.5,1027.9 L1653.6,1028.6 L1651.7,1029.3 L1649.8,1030.0 L1647.9,1030.7 L1645.9,1031.4 L1644.0,1032.0 L1642.1,1032.7 L1640.1,1033.3 L1638.2,1033.9 L1636.2,1034.5 L1634.3,1035.1 L1632.3,1035.7 L1630.4,1036.2 L1628.4,1036.8 L1626.4,1037.3 L1624.5,1037.8 L1622.5,1038.3 L1620.5,1038.8 L1618.5,1039.3 L1616.5,1039.7 L1614.6,1040.2 L1612.6,1040.6 L1610.6,1041.0 L1608.6,1041.4 L1606.6,1041.8 L1604.6,1042.2 L1602.6,1042.5 L1600.6,1042.9 L1598.5,1043.2 L1596.5,1043.5 L1594.5,1043.8 L1592.5,1044.1 L1590.5,1044.4 L1588.5,1044.6 L1586.5,1044.9 L1584.4,1045.1 L1582.4,1045.3 L1580.4,1045.5 L1578.4,1045.7 L1576.3,1045.9 L1574.3,1046.0 L1572.3,1046.2 L1570.2,1046.3 L1568.2,1046.4 L1566.2,1046.5 L1564.1,1046.6 L1562.1,1046.6 L1560.1,1046.7 L1558.0,1046.7 L1556.0,1046.8 L1554.0,1046.8 L1551.9,1046.8 L1549.9,1046.7 L1547.9,1046.7 L1545.8,1046.6 L1543.8,1046.6 L1541.8,1046.5 L1539.7,1046.4 L1537.7,1046.3 L1535.7,1046.2 L1533.6,1046.0 L1531.6,1045.9 L1529.6,1045.7 L1527.5,1045.5 L1525.5,1045.3 L1523.5,1045.1 L1521.5,1044.9 L1519.5,1044.6 L1517.4,1044.4 L1515.4,1044.1 L1513.4,1043.8 L1511.4,1043.5 L1509.4,1043.2 L1507.4,1042.9 L1505.4,1042.5 L1503.4,1042.2 L1501.4,1041.8 L1499.4,1041.4 L1497.4,1041.0 L1495.4,1040.6 L1493.4,1040.2 L1491.4,1039.7 L1489.4,1039.3 L1487.4,1038.8 L1485.4,1038.3 L1483.5,1037.8 L1481.5,1037.3 L1479.5,1036.8 L1477.6,1036.2 L1475.6,1035.7 L1473.6,1035.1 L1471.7,1034.5 L1469.7,1033.9 L1467.8,1033.3 L1465.9,1032.7 L1463.9,1032.0 L1462.0,1031.4 L1460.1,1030.7 L1458.1,1030.0 L1456.2,1029.3 L1454.3,1028.6 L1452.4,1027.9 L1450.5,1027.1 L1448.6,1026.4 L1446.7,1025.6 L1444.8,1024.9 L1442.9,1024.1 L1441.0,1023.3 L1439.2,1022.4 L1437.3,1021.6 L1435.4,1020.8 L1433.6,1019.9 L1431.7,1019.0 L1429.9,1018.1 L1428.0,1017.2 L1426.2,1016.3 L1424.4,1015.4 L1422.6,1014.5 L1420.7,1013.5 L1418.9,1012.6 L1417.1,1011.6 L1415.3,1010.6 L1413.5,1009.6 L1411.8,1008.6 L1410.0,1007.6 L1408.2,1006.5 L1406.4,1005.5 L1404.7,1004.4 L1402.9,1003.3 L1401.2,1002.2 L1399.5,1001.1 L1397.7,1000.0 L1396.0,998.9 L1394.3,997.8 L1392.6,996.6 L1390.9,995.4 L1389.2,994.3 L1387.5,993.1 L1385.8,991.9 L1384.1,990.7 L1382.5,989.4 L1380.8,988.2 L1379.2,986.9 L1377.5,985.7 L1375.9,984.4 L1374.3,983.1 L1372.6,981.8 L1371.0,980.5 L1369.4,979.2 L1367.8,977.9 L1366.2,976.5 L1364.7,975.2 L1363.1,973.8 L1361.5,972.4 L1360.0,971.1 L1358.4,969.7 L1356.9,968.2 L1355.4,966.8 L1353.8,965.4 L1352.3,963.9 L1350.8,962.5 L1349.3,961.0 L1347.8,959.5 L1346.4,958.0 L1344.9,956.5 L1343.4,955.0 L1342.0,953.5 L1340.6,952.0 L1339.1,950.4 L1337.7,948.9 L1336.3,947.3 L1334.9,945.7 L1333.5,944.1 L1332.1,942.5 L1330.7,940.9 L1329.3,939.3 L1328.0,937.7 L1326.6,936.0 L1325.3,934.4 L1324.0,932.7 L1322.7,931.0 L1321.3,929.4 L1320.0,927.7 L1318.7,926.0 L1317.5,924.2 L1316.2,922.5 L1314.9,920.8 L1313.7,919.0 L1312.4,917.3 L1311.2,915.5 L1310.0,913.7 L1308.8,911.9 L1307.6,910.1 L1306.4,908.3 L1305.2,906.5 L1304.0,904.7 L1302.9,902.8 L1301.7,901.0 L1300.6,899.1 L1299.5,897.2 L1298.3,895.4 L1297.2,893.5 L1296.1,891.6 L1295.1,889.6 L1294.0,887.7 L1292.9,885.8 L1291.9,883.8 L1290.8,881.9 L1289.8,879.9 L1288.8,877.9 L1287.8,876.0 L1286.8,874.0 L1285.8,872.0 L1284.8,869.9 L1283.9,867.9 L1282.9,865.9 L1282.0,863.8 L1281.0,861.8 L1280.1,859.7 L1279.2,857.6 L1278.3,855.5 L1277.5,853.4 L1276.6,851.3 L1275.7,849.2 L1274.9,847.1 L1274.1,845.0 L1273.3,842.8 L1272.4,840.7 L1271.7,838.5 L1270.9,836.3 L1270.1,834.1 L1269.4,831.9 L1268.6,829.7 L1267.9,827.5 L1267.2,825.3 L1266.5,823.0 L1265.8,820.8 L1265.1,818.5 L1264.5,816.2 L1263.8,814.0 L1263.2,811.7 L1262.6,809.4 L1262.0,807.1 L1261.4,804.7 L1260.8,802.4 L1260.2,800.1 L1259.7,797.7 L1259.2,795.3 L1258.7,793.0 L1258.2,790.6 L1257.7,788.2 L1257.2,785.8 L1256.7,783.4 L1256.3,780.9 L1255.9,778.5 L1255.5,776.1 L1255.1,773.6 L1254.7,771.1 L1254.3,768.7 L1254.0,766.2 L1253.7,763.7 L1253.4,761.2 L1253.1,758.7 L1252.8,756.1 L1252.5,753.6 L1252.3,751.0 L1252.1,748.5 L1251.9,745.9 L1251.7,743.3 L1251.5,740.7 L1251.4,738.1 L1251.2,735.5 L1251.1,732.9 L1251.0,730.3 L1250.9,727.6 L1250.9,725.0 L1250.8,722.3 L1250.8,719.6 L1250.8,717.0 L1250.9,714.3 L1250.9,711.6 L1251.0,708.8 L1251.0,706.1 L1251.2,703.4 L1251.3,700.6 L1251.4,697.9 L1251.6,695.1 L1251.8,692.3 L1252.0,689.6 L1252.3,686.8 L1252.5,684.0 L1252.8,681.2 L1253.1,678.3 L1253.5,675.5 L1253.8,672.6 L1254.2,669.8 L1254.6,666.9 L1255.0,664.1 L1255.5,661.2 L1256.0,658.3 L1256.5,655.4 L1257.0,652.5 L1257.6,649.6 L1258.2,646.6 L1258.8,643.7 L1259.5,640.8 L1260.1,637.8 L1260.8,634.9 L1261.6,631.9 L1262.3,628.9 L1263.1,625.9 L1264.0,622.9 L1264.8,619.9 L1265.7,616.9 L1266.6,613.9 L1267.6,610.9 L1268.6,607.9 L1269.6,604.8 L1270.6,601.8 L1271.7,598.8 L1272.8,595.7 L1274.0,592.7 L1275.2,589.6 L1276.4,586.5 L1277.7,583.5 L1279.0,580.4 L1280.3,577.3 L1281.7,574.3 L1283.1,571.2 L1284.5,568.1 L1286.0,565.0 L1287.5,561.9 L1289.1,558.8 L1290.7,555.7 L1292.4,552.7 L1294.0,549.6 L1295.8,546.5 L1297.6,543.4 L1299.4,540.3 L1301.2,537.2 L1303.1,534.2 L1305.1,531.1 L1307.1,528.0 L1309.1,525.0 L1311.2,521.9 L1313.3,518.9 L1315.5,515.8 L1317.7,512.8 L1320.0,509.8 L1322.3,506.8 L1324.7,503.8 L1327.1,500.8 L1329.6,497.8 L1332.1,494.8 L1334.7,491.9 L1337.3,488.9 L1340.0,486.0 L1342.7,483.1 L1345.5,480.3 L1348.3,477.4 L1351.2,474.6 L1354.1,471.8 L1357.1,469.0 L1360.2,466.2 L1363.2,463.5 L1366.4,460.8 L1369.6,458.1 L1372.8,455.4 L1376.1,452.8 L1379.5,450.2 L1382.9,447.7 L1386.3,445.2 L1389.8,442.7 L1393.4,440.2 L1397.0,437.9 L1400.7,435.5 L1404.4,433.2 L1408.2,430.9 L1412.0,428.7 L1415.8,426.5 L1419.8,424.4 L1423.7,422.3 L1427.7,420.3 L1431.8,418.4 L1435.9,416.4 L1440.0,414.6 L1444.2,412.8 L1448.4,411.1 L1452.7,409.4 L1457.0,407.8 L1461.4,406.3 L1465.8,404.8 L1470.2,403.4 L1474.6,402.0 L1479.1,400.8 L1483.6,399.6 L1488.2,398.4 L1492.8,397.4 L1497.4,396.4 L1502.0,395.5 L1506.7,394.6 L1511.3,393.9 L1516.0,393.2 L1520.7,392.6 L1525.4,392.1 L1530.2,391.7 L1534.9,391.3 L1539.7,391.0 L1544.4,390.8 L1549.2,390.7 L1554.0,390.6 Z" fill="none" stroke="#ff7f50" stroke-width="2.8"/>
<path d="M2007.2,-296.9 L2305.1,-180.7 L2444.5,-0.3 L2504.0,148.3 L2530.6,266.3 L2541.6,362.7 L2544.0,443.9 L2541.2,514.2 L2534.8,576.1 L2525.9,631.6 L2515.0,681.9 L2502.4,728.1 L2488.4,770.9 L2473.0,810.7 L2456.3,848.0 L2438.3,883.0 L2419.0,916.0 L2398.5,947.2 L2376.5,976.5 L2353.2,1004.2 L2328.4,1030.1 L2302.2,1054.2 L2274.4,1076.4 L2245.2,1096.6 L2214.5,1114.7 L2182.4,1130.4 L2149.1,1143.6 L2114.6,1154.1 L2079.3,1161.8 L2043.4,1166.4 L2007.2,1168.0 L1971.0,1166.4 L1935.1,1161.8 L1899.8,1154.1 L1865.4,1143.6 L1832.1,1130.4 L1800.0,1114.7 L1769.3,1096.6 L1740.1,1076.4 L1712.3,1054.2 L1686.1,1030.1 L1679.7,1023.8 L1677.7,1021.6 L1675.6,1019.5 L1673.5,1017.4 L1671.4,1015.2 L1669.4,1013.0 L1667.4,1010.8 L1665.3,1008.6 L1663.3,1006.4 L1661.3,1004.2 L1659.3,1001.9 L1657.3,999.7 L1655.3,997.4 L1653.4,995.2 L1651.4,992.9 L1649.4,990.6 L1647.5,988.3 L1645.6,985.9 L1643.7,983.6 L1641.7,981.3 L1639.8,978.9 L1638.0,976.5 L1636.1,974.2 L1634.2,971.8 L1632.3,969.4 L1630.5,966.9 L1628.7,964.5 L1626.8,962.1 L1625.0,959.6 L1623.2,957.2 L1621.4,954.7 L1619.6,952.2 L1617.8,949.7 L1616.0,947.2 L1614.3,944.6 L1612.5,942.1 L1610.7,939.5 L1609.0,937.0 L1607.3,934.4 L1605.6,931.8 L1603.9,929.2 L1602.2,926.6 L1600.5,924.0 L1598.8,921.3 L1597.1,918.7 L1595.4,916.0 L1593.8,913.3 L1592.1,910.6 L1590.5,907.9 L1588.9,905.2 L1587.3,902.5 L1585.6,899.7 L1584.0,897.0 L1582.5,894.2 L1580.9,891.4 L1579.3,888.6 L1577.7,885.8 L1576.2,883.0 L1574.6,880.2 L1573.1,877.3 L1571.6,874.4 L1570.0,871.5 L1568.5,868.6 L1567.0,865.7 L1565.5,862.8 L1564.0,859.9 L1562.6,856.9 L1561.1,853.9 L1559.6,851.0 L1558.2,848.0 L1556.8,844.9 L1555.3,841.9 L1553.9,838.9 L1552.5,835.8 L1551.1,832.7 L1549.7,829.6 L1548.3,826.5 L1546.9,823.4 L1545.6,820.2 L1544.2,817.1 L1542.8,813.9 L1541.5,810.7 L1540.2,807.5 L1538.8,804.2 L1537.5,801.0 L1536.2,797.7 L1534.9,794.4 L1533.6,791.1 L1532.4,787.8 L1531.1,784.4 L1529.8,781.1 L1528.6,777.7 L1527.3,774.3 L1526.1,770.9 L1524.9,767.4 L1523.7,764.0 L1522.5,760.5 L1521.3,757.0 L1520.1,753.4 L1518.9,749.9 L1517.7,746.3 L1516.6,742.7 L1515.4,739.1 L1514.3,735.5 L1513.2,731.8 L1512.1,728.1 L1510.9,724.4 L1509.8,720.7 L1508.8,716.9 L1507.7,713.1 L1506.6,709.3 L1505.6,705.5 L1504.5,701.6 L1503.5,697.7 L1502.5,693.8 L1501.5,689.9 L1500.5,685.9 L1499.5,681.9 L1498.5,677.9 L1497.5,673.8 L1496.6,669.8 L1495.6,665.6 L1494.7,661.5 L1493.8,657.3 L1492.9,653.1 L1492.0,648.9 L1491.1,644.6 L1490.3,640.3 L1489.4,635.9 L1488.6,631.6 L1487.7,627.1 L1486.9,622.7 L1486.1,618.2 L1485.4,613.7 L1484.6,609.1 L1483.8,604.5 L1483.1,599.9 L1482.4,595.2 L1481.7,590.5 L1481.0,585.7 L1480.3,580.9 L1479.7,576.1 L1479.0,571.2 L1478.4,566.2 L1477.8,561.3 L1477.2,556.2 L1476.7,551.1 L1476.1,546.0 L1475.6,540.8 L1475.1,535.6 L1474.6,530.3 L1474.2,525.0 L1473.7,519.6 L1473.3,514.2 L1472.9,508.7 L1472.6,503.1 L1472.2,497.5 L1471.9,491.8 L1471.6,486.0 L1471.4,480.2 L1471.2,474.4 L1471.0,468.4 L1470.8,462.4 L1470.7,456.3 L1470.6,450.2 L1470.5,443.9 L1470.5,437.6 L1470.5,431.2 L1470.5,424.8 L1470.6,418.2 L1470.7,411.6 L1470.9,404.9 L1471.1,398.1 L1471.4,391.2 L1471.7,384.2 L1472.0,377.1 L1472.4,370.0 L1472.9,362.7 L1473.4,355.3 L1474.0,347.8 L1474.7,340.2 L1475.4,332.5 L1476.2,324.7 L1477.0,316.7 L1477.9,308.6 L1478.9,300.4 L1480.0,292.1 L1481.2,283.6 L1482.5,275.0 L1483.9,266.3 L1485.3,257.4 L1486.9,248.3 L1488.6,239.1 L1490.5,229.7 L1492.4,220.2 L1510.5,148.3 L1569.9,-0.3 L1709.4,-180.7 L2007.2,-296.9 Z" fill="none" stroke="#ff7f50" stroke-width="2.8"/>
<path d="M607.6,-251.5 L694.5,-238.7 L770.5,-204.3 L830.0,-156.7 L873.1,-103.6 L902.4,-50.2 L920.9,0.9 L931.4,48.8 L935.6,92.9 L935.2,133.5 L931.2,170.6 L924.4,204.6 L920.1,220.5 L919.3,223.1 L918.5,225.7 L917.7,228.2 L916.9,230.7 L916.1,233.2 L915.3,235.7 L914.4,238.2 L913.6,240.6 L912.7,243.1 L911.8,245.5 L910.9,247.9 L910.0,250.2 L909.1,252.6 L908.2,254.9 L907.2,257.3 L906.3,259.6 L905.3,261.9 L904.4,264.1 L903.4,266.4 L902.4,268.6 L901.4,270.9 L900.4,273.1 L899.4,275.3 L898.3,277.4 L897.3,279.6 L896.2,281.7 L895.2,283.9 L894.1,286.0 L893.0,288.1 L892.0,290.1 L890.9,292.2 L889.8,294.2 L888.7,296.3 L887.5,298.3 L886.4,300.3 L885.3,302.3 L884.2,304.2 L883.0,306.2 L881.9,308.1 L880.7,310.1 L879.5,312.0 L878.3,313.9 L877.2,315.7 L876.0,317.6 L874.8,319.5 L873.6,321.3 L872.4,323.1 L871.1,324.9 L869.9,326.7 L868.7,328.5 L867.4,330.3 L866.2,332.0 L865.0,333.8 L863.7,335.5 L862.4,337.2 L861.2,338.9 L859.9,340.6 L858.6,342.3 L857.3,343.9 L856.0,345.6 L854.8,347.2 L853.5,348.8 L852.1,350.5 L850.8,352.1 L849.5,353.6 L848.2,355.2 L846.9,356.8 L845.5,358.3 L844.2,359.8 L842.9,361.4 L841.5,362.9 L840.2,364.4 L838.8,365.8 L837.4,367.3 L836.1,368.8 L834.7,370.2 L833.3,371.6 L832.0,373.1 L830.6,374.5 L829.2,375.9 L827.8,377.3 L826.4,378.6 L825.0,380.0 L823.6,381.3 L822.2,382.7 L820.8,384.0 L819.4,385.3 L818.0,386.6 L816.5,387.9 L815.1,389.2 L813.7,390.5 L812.2,391.7 L810.8,393.0 L809.4,394.2 L807.9,395.4 L806.5,396.7 L805.0,397.9 L803.6,399.0 L802.1,400.2 L800.6,401.4 L799.2,402.6 L797.7,403.7 L796.2,404.8 L794.8,406.0 L793.3,407.1 L791.8,408.2 L790.3,409.3 L779.9,416.6 L761.6,428.1 L743.1,438.0 L724.2,446.6 L705.1,453.8 L685.9,459.6 L666.4,464.2 L646.9,467.4 L627.3,469.3 L607.6,469.9 L588.0,469.3 L568.4,467.4 L548.9,464.2 L529.4,459.6 L510.2,453.8 L491.1,446.6 L472.2,438.0 L453.7,428.1 L435.4,416.6 L417.6,403.7 L400.2,389.2 L383.3,373.1 L367.1,355.2 L351.6,335.5 L337.0,313.9 L323.3,290.1 L310.9,264.1 L300.0,235.7 L290.9,204.6 L284.1,170.6 L280.0,133.5 L279.6,92.9 L283.9,48.8 L294.3,0.9 L312.9,-50.2 L342.2,-103.6 L385.3,-156.7 L444.8,-204.3 L520.8,-238.7 L607.6,-251.5 Z" fill="none" stroke="#ff7f50" stroke-width="2.8"/>
</g></svg>
<div class="mapclip">
<div class="t" style="left:1148.5px;top:538.8px;font-size:12.74px;line-height:12.74px;font-weight:700;color:#fff;text-shadow:0 0 2px rgba(0,0,0,0.6)">Europe</div>
<div class="t" style="left:1132.0px;top:601.7px;font-size:13.31px;line-height:13.31px;font-weight:700;color:#fff;text-shadow:0 0 2px rgba(0,0,0,0.6)">Slovakia</div>
<div class="t" style="left:1106.5px;top:751.8px;font-size:13.18px;line-height:13.18px;font-weight:700;color:#fff;text-shadow:0 0 2px rgba(0,0,0,0.6)">Bratislava</div>
<div class="t" style="left:1303.7px;top:798.7px;font-size:13.37px;line-height:13.37px;font-weight:700;color:#fff;text-shadow:0 0 2px rgba(0,0,0,0.6)">Middle East</div>
<div class="t" style="left:1516.0px;top:760.7px;font-size:13.30px;line-height:13.30px;font-weight:700;color:#fff;text-shadow:0 0 2px rgba(0,0,0,0.6)">Western Asia</div>
<svg class="t" style="left:0;top:0" width="1656" height="1080"><path d="M1135.9,626.4 L1141.7,623.0 L1146.1,620.1 L1147.0,617.2 L1150.9,616.3 L1156.7,615.3 L1158.6,618.2 L1163.5,619.2 L1170.2,616.7 L1177.0,618.2 L1180.4,622.1 L1180.4,625.0 L1178.0,628.8 L1173.1,627.9 L1171.2,626.9 L1166.4,627.9 L1162.5,630.3 L1156.2,631.7 L1151.9,634.1 L1150.0,637.5 L1142.2,637.5 L1137.4,634.6 L1135.9,630.7 Z" fill="#ff7f50" fill-opacity="0.2" stroke="#ff7f50" stroke-width="2.8" stroke-linejoin="round"/><circle cx="1137" cy="776" r="5.2" fill="none" stroke="#ff7f50" stroke-width="1.5"/><circle cx="1137" cy="776" r="3.6" fill="#fff"/></svg>
<div class="t" style="left:844px;top:1070px;width:486px;height:1px;background:rgba(80,45,35,0.7)"></div>
<div class="t" style="left:1330px;top:1063px;width:292px;height:14px;background:rgba(255,255,255,0.7)"></div>
<div class="t" style="left:1428px;top:1063px;width:1px;height:14px;background:rgba(120,120,120,0.5)"></div>
<div class="t" style="left:1583px;top:1063px;width:1px;height:14px;background:rgba(120,120,120,0.5)"></div>
<div class="t" style="left:1335px;top:1066px;font-size:10px;line-height:12px;color:#333">Keyboard shortcuts</div>
<div class="t" style="left:1433.5px;top:1066px;font-size:10px;line-height:12px;color:#333">Map Data ©2026 Google, INEGI</div>
<div class="t" style="left:1589.8px;top:1066px;font-size:10px;line-height:12px;color:#333">Terms</div>
<svg class="t" style="left:0;top:0" width="1656" height="1080"><text x="852" y="1068.5" font-family="Liberation Sans" font-size="17.5" font-weight="700" textLength="55.5" lengthAdjust="spacingAndGlyphs" fill="#fff" stroke="#3a3a3a" stroke-width="2.2" paint-order="stroke">Google</text></svg>
<div class="t" style="left:1571px;top:1010px;width:42px;height:42px;border-radius:50%;background:#d4d4d4"></div>
<div class="t" style="left:1568px;top:992px;width:56px;height:56px;border-radius:50%;background:#1976d2;box-shadow:0 3px 5px -1px rgba(0,0,0,.2),0 6px 10px 0 rgba(0,0,0,.14),0 1px 18px 0 rgba(0,0,0,.12)"></div>
<svg class="t" style="left:1584px;top:1008px" width="24" height="24" viewBox="0 0 24 24"><path d="M17 3H5c-1.11 0-2 .9-2 2v14c0 1.1.89 2 2 2h14c1.1 0 2-.9 2-2V7l-4-4zm-5 16c-1.66 0-3-1.34-3-3s1.34-3 3-3 3 1.34 3 3-1.34 3-3 3zm3-10H5V5h10v4z" fill="#fff"/></svg>
</div>
<div class="t" style="left:852px;top:277px;width:168px;height:40px;background:#fff;border-radius:2px;box-shadow:0 1px 4px -1px rgba(0,0,0,0.3)"></div>
<div class="t" style="left:921px;top:279px;width:1px;height:36px;background:#ebebeb"></div>
<div class="t" style="left:869.2px;top:288px;font-size:17.3px;line-height:20px;font-weight:700;color:#000">Map</div>
<div class="t" style="left:939px;top:288px;font-size:17.9px;line-height:20px;color:#565656">Satellite</div>
<div class="t" style="left:1455px;top:276px;width:109px;height:43px;background:#fff;border-radius:4px;box-shadow:0 1px 4px -1px rgba(0,0,0,0.3)"></div>
<svg class="t" style="left:1467.3px;top:286.5px" width="21.33" height="21.33" viewBox="0 0 24 24"><path d="M15 3l2.3 2.3-2.89 2.87 1.42 1.42L18.7 6.7 21 9V3zM3 9l2.3-2.3 2.87 2.89 1.42-1.42L6.7 5.3 9 3H3zm6 12l-2.3-2.3 2.89-2.87-1.42-1.42L5.3 17.3 3 15v6zm12-6l-2.3 2.3-2.87-2.89-1.42 1.42 2.89 2.87L15 21h6z" fill="#333"/></svg>
<div class="t" style="left:1496.3px;top:289px;font-size:14.3px;line-height:16px;color:#333">FIT ALL</div>
<div class="t" style="left:1574px;top:277px;width:40px;height:40px;background:#fff;border-radius:2px;box-shadow:0 1px 4px -1px rgba(0,0,0,0.3)"></div>
<svg class="t" style="left:0;top:0" width="1656" height="1080"><path d="M1585,288h6.5v2.5h-4v4h-2.5z M1603,288h-6.5v2.5h4v4h2.5z M1585,306h6.5v-2.5h-4v-4h-2.5z M1603,306h-6.5v-2.5h4v-4h2.5z" fill="#666"/></svg>
<div class="t" style="left:842px;top:267px;width:782px;height:810px;border:2px solid #1a73e8"></div>
</body></html>
